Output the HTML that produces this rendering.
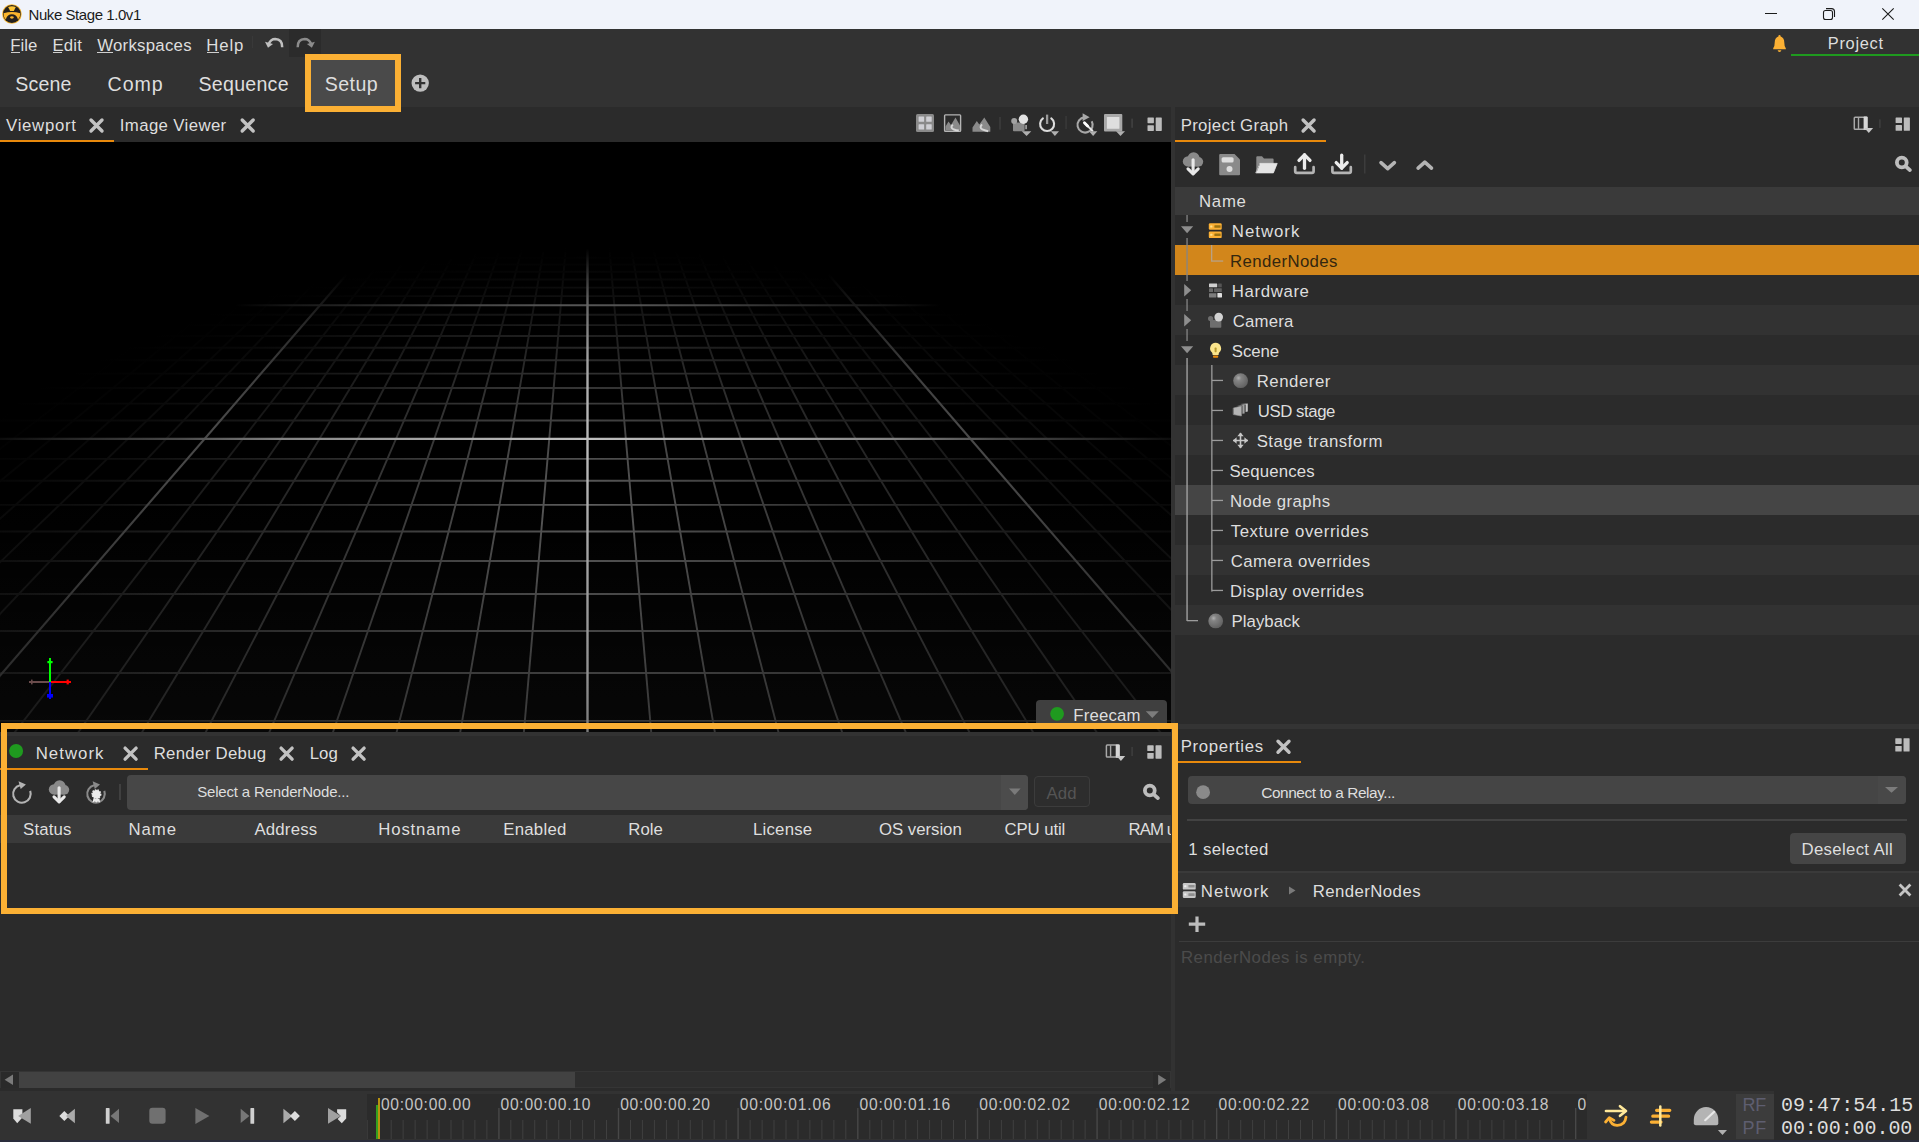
<!DOCTYPE html><html><head><meta charset="utf-8"><title>Nuke Stage 1.0v1</title><style>html,body{margin:0;padding:0;background:#2b2b2b;overflow:hidden}#r{position:relative;width:1919px;height:1142px;overflow:hidden;background:#2b2b2b;font-family:"Liberation Sans",sans-serif}</style></head><body><div id="r"><div style="position:absolute;left:0px;top:0px;width:1919px;height:29px;background:#f0f3fa;"></div>
<div style="position:absolute;left:0px;top:29px;width:1919px;height:78px;background:#323232;"></div>
<div style="position:absolute;left:288.5px;top:29px;width:32.5px;height:27.6px;background:#2b2b2b;"></div>
<div style="position:absolute;left:0px;top:107px;width:1171px;height:35px;background:#2b2b2b;"></div>
<div style="position:absolute;left:1171px;top:107px;width:4px;height:984px;background:#323232;"></div>
<div style="position:absolute;left:1175px;top:107px;width:744px;height:616px;background:#2b2b2b;"></div>
<div style="position:absolute;left:1175px;top:724px;width:744px;height:5.4px;background:#343434;"></div>
<div style="position:absolute;left:1175px;top:729px;width:744px;height:362px;background:#2b2b2b;"></div>
<div style="position:absolute;left:0px;top:732px;width:1171px;height:4px;background:#323232;"></div>
<div style="position:absolute;left:0px;top:736px;width:1171px;height:355px;background:#2b2b2b;"></div>
<div style="position:absolute;left:0px;top:1091px;width:1919px;height:49px;background:#323232;"></div>
<div style="position:absolute;left:367px;top:1094px;width:1220px;height:45px;background:#2b2b2b;"></div>
<div style="position:absolute;left:0px;top:1140px;width:1919px;height:2px;background:#2a2d3c;"></div>
<div style="position:absolute;left:0;top:142px;width:1171px;height:590px;background:#000;overflow:hidden"><svg width="1171" height="590" viewBox="0 0 1171 590" style="position:absolute;left:0;top:0;shape-rendering:geometricPrecision"><defs><linearGradient id="g0" gradientUnits="userSpaceOnUse" x1="-462.0" y1="612.8" x2="57.9" y2="236.8"><stop offset="0.00" stop-color="#000000"/><stop offset="0.08" stop-color="#000000"/><stop offset="0.17" stop-color="#000000"/><stop offset="0.25" stop-color="#000000"/><stop offset="0.33" stop-color="#000000"/><stop offset="0.42" stop-color="#010101"/><stop offset="0.50" stop-color="#010101"/><stop offset="0.58" stop-color="#010101"/><stop offset="0.67" stop-color="#010101"/><stop offset="0.75" stop-color="#010101"/><stop offset="0.83" stop-color="#010101"/><stop offset="0.92" stop-color="#000000"/><stop offset="1.00" stop-color="#000000"/></linearGradient><linearGradient id="g1" gradientUnits="userSpaceOnUse" x1="-554.1" y1="734.5" x2="138.8" y2="199.8"><stop offset="0.00" stop-color="#000000"/><stop offset="0.08" stop-color="#000000"/><stop offset="0.17" stop-color="#010101"/><stop offset="0.25" stop-color="#010101"/><stop offset="0.33" stop-color="#010101"/><stop offset="0.42" stop-color="#020202"/><stop offset="0.50" stop-color="#020202"/><stop offset="0.58" stop-color="#030303"/><stop offset="0.67" stop-color="#030303"/><stop offset="0.75" stop-color="#030303"/><stop offset="0.83" stop-color="#020202"/><stop offset="0.92" stop-color="#010101"/><stop offset="1.00" stop-color="#000000"/></linearGradient><linearGradient id="g2" gradientUnits="userSpaceOnUse" x1="-477.9" y1="734.5" x2="195.8" y2="177.4"><stop offset="0.00" stop-color="#010101"/><stop offset="0.08" stop-color="#020202"/><stop offset="0.17" stop-color="#020202"/><stop offset="0.25" stop-color="#030303"/><stop offset="0.33" stop-color="#040404"/><stop offset="0.42" stop-color="#040404"/><stop offset="0.50" stop-color="#050505"/><stop offset="0.58" stop-color="#050505"/><stop offset="0.67" stop-color="#060606"/><stop offset="0.75" stop-color="#050505"/><stop offset="0.83" stop-color="#040404"/><stop offset="0.92" stop-color="#020202"/><stop offset="1.00" stop-color="#000000"/></linearGradient><linearGradient id="g3" gradientUnits="userSpaceOnUse" x1="-401.8" y1="734.5" x2="241.5" y2="161.7"><stop offset="0.00" stop-color="#030303"/><stop offset="0.08" stop-color="#040404"/><stop offset="0.17" stop-color="#050505"/><stop offset="0.25" stop-color="#060606"/><stop offset="0.33" stop-color="#060606"/><stop offset="0.42" stop-color="#070707"/><stop offset="0.50" stop-color="#080808"/><stop offset="0.58" stop-color="#090909"/><stop offset="0.67" stop-color="#090909"/><stop offset="0.75" stop-color="#080808"/><stop offset="0.83" stop-color="#060606"/><stop offset="0.92" stop-color="#030303"/><stop offset="1.00" stop-color="#000000"/></linearGradient><linearGradient id="g4" gradientUnits="userSpaceOnUse" x1="-325.7" y1="734.5" x2="280.5" y2="149.7"><stop offset="0.00" stop-color="#060606"/><stop offset="0.08" stop-color="#070707"/><stop offset="0.17" stop-color="#080808"/><stop offset="0.25" stop-color="#090909"/><stop offset="0.33" stop-color="#0a0a0a"/><stop offset="0.42" stop-color="#0b0b0b"/><stop offset="0.50" stop-color="#0c0c0c"/><stop offset="0.58" stop-color="#0d0d0d"/><stop offset="0.67" stop-color="#0d0d0d"/><stop offset="0.75" stop-color="#0c0c0c"/><stop offset="0.83" stop-color="#090909"/><stop offset="0.92" stop-color="#040404"/><stop offset="1.00" stop-color="#000000"/></linearGradient><linearGradient id="g5" gradientUnits="userSpaceOnUse" x1="-249.6" y1="734.5" x2="315.0" y2="140.3"><stop offset="0.00" stop-color="#090909"/><stop offset="0.08" stop-color="#0a0a0a"/><stop offset="0.17" stop-color="#0b0b0b"/><stop offset="0.25" stop-color="#0c0c0c"/><stop offset="0.33" stop-color="#0e0e0e"/><stop offset="0.42" stop-color="#0f0f0f"/><stop offset="0.50" stop-color="#101010"/><stop offset="0.58" stop-color="#111111"/><stop offset="0.67" stop-color="#111111"/><stop offset="0.75" stop-color="#101010"/><stop offset="0.83" stop-color="#0c0c0c"/><stop offset="0.92" stop-color="#060606"/><stop offset="1.00" stop-color="#000000"/></linearGradient><linearGradient id="g6" gradientUnits="userSpaceOnUse" x1="-548.9" y1="698.2" x2="1724.0" y2="698.2"><stop offset="0.00" stop-color="#000000"/><stop offset="0.08" stop-color="#040404"/><stop offset="0.17" stop-color="#0c0c0c"/><stop offset="0.25" stop-color="#151515"/><stop offset="0.33" stop-color="#1f1f1f"/><stop offset="0.42" stop-color="#272727"/><stop offset="0.50" stop-color="#2a2a2a"/><stop offset="0.58" stop-color="#272727"/><stop offset="0.67" stop-color="#1f1f1f"/><stop offset="0.75" stop-color="#151515"/><stop offset="0.83" stop-color="#0c0c0c"/><stop offset="0.92" stop-color="#040404"/><stop offset="1.00" stop-color="#000000"/></linearGradient><linearGradient id="g7" gradientUnits="userSpaceOnUse" x1="-97.4" y1="734.5" x2="375.2" y2="126.6"><stop offset="0.00" stop-color="#0f0f0f"/><stop offset="0.08" stop-color="#111111"/><stop offset="0.17" stop-color="#131313"/><stop offset="0.25" stop-color="#151515"/><stop offset="0.33" stop-color="#171717"/><stop offset="0.42" stop-color="#191919"/><stop offset="0.50" stop-color="#1a1a1a"/><stop offset="0.58" stop-color="#1b1b1b"/><stop offset="0.67" stop-color="#1b1b1b"/><stop offset="0.75" stop-color="#181818"/><stop offset="0.83" stop-color="#121212"/><stop offset="0.92" stop-color="#090909"/><stop offset="1.00" stop-color="#000000"/></linearGradient><linearGradient id="g8" gradientUnits="userSpaceOnUse" x1="-425.5" y1="578.9" x2="1600.6" y2="578.9"><stop offset="0.00" stop-color="#000000"/><stop offset="0.08" stop-color="#050505"/><stop offset="0.17" stop-color="#0d0d0d"/><stop offset="0.25" stop-color="#191919"/><stop offset="0.33" stop-color="#252525"/><stop offset="0.42" stop-color="#313131"/><stop offset="0.50" stop-color="#353535"/><stop offset="0.58" stop-color="#313131"/><stop offset="0.67" stop-color="#252525"/><stop offset="0.75" stop-color="#191919"/><stop offset="0.83" stop-color="#0d0d0d"/><stop offset="0.92" stop-color="#050505"/><stop offset="1.00" stop-color="#000000"/></linearGradient><linearGradient id="g9" gradientUnits="userSpaceOnUse" x1="-21.3" y1="734.5" x2="402.3" y2="121.6"><stop offset="0.00" stop-color="#131313"/><stop offset="0.08" stop-color="#151515"/><stop offset="0.17" stop-color="#171717"/><stop offset="0.25" stop-color="#191919"/><stop offset="0.33" stop-color="#1c1c1c"/><stop offset="0.42" stop-color="#1e1e1e"/><stop offset="0.50" stop-color="#202020"/><stop offset="0.58" stop-color="#212121"/><stop offset="0.67" stop-color="#212121"/><stop offset="0.75" stop-color="#1d1d1d"/><stop offset="0.83" stop-color="#151515"/><stop offset="0.92" stop-color="#0a0a0a"/><stop offset="1.00" stop-color="#000000"/></linearGradient><linearGradient id="g10" gradientUnits="userSpaceOnUse" x1="-371.9" y1="531.0" x2="1547.0" y2="531.0"><stop offset="0.00" stop-color="#000000"/><stop offset="0.08" stop-color="#050505"/><stop offset="0.17" stop-color="#0e0e0e"/><stop offset="0.25" stop-color="#1a1a1a"/><stop offset="0.33" stop-color="#282828"/><stop offset="0.42" stop-color="#353535"/><stop offset="0.50" stop-color="#3b3b3b"/><stop offset="0.58" stop-color="#353535"/><stop offset="0.67" stop-color="#282828"/><stop offset="0.75" stop-color="#1a1a1a"/><stop offset="0.83" stop-color="#0e0e0e"/><stop offset="0.92" stop-color="#050505"/><stop offset="1.00" stop-color="#000000"/></linearGradient><linearGradient id="g11" gradientUnits="userSpaceOnUse" x1="54.8" y1="734.5" x2="428.0" y2="117.4"><stop offset="0.00" stop-color="#171717"/><stop offset="0.08" stop-color="#191919"/><stop offset="0.17" stop-color="#1b1b1b"/><stop offset="0.25" stop-color="#1e1e1e"/><stop offset="0.33" stop-color="#212121"/><stop offset="0.42" stop-color="#232323"/><stop offset="0.50" stop-color="#262626"/><stop offset="0.58" stop-color="#272727"/><stop offset="0.67" stop-color="#262626"/><stop offset="0.75" stop-color="#222222"/><stop offset="0.83" stop-color="#191919"/><stop offset="0.92" stop-color="#0b0b0b"/><stop offset="1.00" stop-color="#000000"/></linearGradient><linearGradient id="g12" gradientUnits="userSpaceOnUse" x1="-322.6" y1="489.0" x2="1497.7" y2="489.0"><stop offset="0.00" stop-color="#000000"/><stop offset="0.08" stop-color="#050505"/><stop offset="0.17" stop-color="#0f0f0f"/><stop offset="0.25" stop-color="#1c1c1c"/><stop offset="0.33" stop-color="#2b2b2b"/><stop offset="0.42" stop-color="#3a3a3a"/><stop offset="0.50" stop-color="#424242"/><stop offset="0.58" stop-color="#3a3a3a"/><stop offset="0.67" stop-color="#2b2b2b"/><stop offset="0.75" stop-color="#1c1c1c"/><stop offset="0.83" stop-color="#0f0f0f"/><stop offset="0.92" stop-color="#050505"/><stop offset="1.00" stop-color="#000000"/></linearGradient><linearGradient id="g13" gradientUnits="userSpaceOnUse" x1="130.9" y1="734.5" x2="452.6" y2="114.0"><stop offset="0.00" stop-color="#1a1a1a"/><stop offset="0.08" stop-color="#1d1d1d"/><stop offset="0.17" stop-color="#202020"/><stop offset="0.25" stop-color="#232323"/><stop offset="0.33" stop-color="#262626"/><stop offset="0.42" stop-color="#292929"/><stop offset="0.50" stop-color="#2c2c2c"/><stop offset="0.58" stop-color="#2e2e2e"/><stop offset="0.67" stop-color="#2d2d2d"/><stop offset="0.75" stop-color="#272727"/><stop offset="0.83" stop-color="#1c1c1c"/><stop offset="0.92" stop-color="#0d0d0d"/><stop offset="1.00" stop-color="#000000"/></linearGradient><linearGradient id="g14" gradientUnits="userSpaceOnUse" x1="-276.9" y1="452.0" x2="1452.0" y2="452.0"><stop offset="0.00" stop-color="#000000"/><stop offset="0.08" stop-color="#050505"/><stop offset="0.17" stop-color="#0f0f0f"/><stop offset="0.25" stop-color="#1d1d1d"/><stop offset="0.33" stop-color="#2d2d2d"/><stop offset="0.42" stop-color="#3e3e3e"/><stop offset="0.50" stop-color="#484848"/><stop offset="0.58" stop-color="#3e3e3e"/><stop offset="0.67" stop-color="#2d2d2d"/><stop offset="0.75" stop-color="#1d1d1d"/><stop offset="0.83" stop-color="#0f0f0f"/><stop offset="0.92" stop-color="#050505"/><stop offset="1.00" stop-color="#000000"/></linearGradient><linearGradient id="g15" gradientUnits="userSpaceOnUse" x1="207.0" y1="734.5" x2="476.2" y2="111.3"><stop offset="0.00" stop-color="#1e1e1e"/><stop offset="0.08" stop-color="#212121"/><stop offset="0.17" stop-color="#242424"/><stop offset="0.25" stop-color="#272727"/><stop offset="0.33" stop-color="#2b2b2b"/><stop offset="0.42" stop-color="#2f2f2f"/><stop offset="0.50" stop-color="#333333"/><stop offset="0.58" stop-color="#353535"/><stop offset="0.67" stop-color="#333333"/><stop offset="0.75" stop-color="#2c2c2c"/><stop offset="0.83" stop-color="#1f1f1f"/><stop offset="0.92" stop-color="#0e0e0e"/><stop offset="1.00" stop-color="#000000"/></linearGradient><linearGradient id="g16" gradientUnits="userSpaceOnUse" x1="-234.1" y1="419.0" x2="1409.2" y2="419.0"><stop offset="0.00" stop-color="#000000"/><stop offset="0.08" stop-color="#050505"/><stop offset="0.17" stop-color="#101010"/><stop offset="0.25" stop-color="#1e1e1e"/><stop offset="0.33" stop-color="#2f2f2f"/><stop offset="0.42" stop-color="#424242"/><stop offset="0.50" stop-color="#4f4f4f"/><stop offset="0.58" stop-color="#424242"/><stop offset="0.67" stop-color="#2f2f2f"/><stop offset="0.75" stop-color="#1e1e1e"/><stop offset="0.83" stop-color="#101010"/><stop offset="0.92" stop-color="#050505"/><stop offset="1.00" stop-color="#000000"/></linearGradient><linearGradient id="g17" gradientUnits="userSpaceOnUse" x1="283.1" y1="734.5" x2="499.2" y2="109.1"><stop offset="0.00" stop-color="#212121"/><stop offset="0.08" stop-color="#242424"/><stop offset="0.17" stop-color="#282828"/><stop offset="0.25" stop-color="#2c2c2c"/><stop offset="0.33" stop-color="#303030"/><stop offset="0.42" stop-color="#353535"/><stop offset="0.50" stop-color="#393939"/><stop offset="0.58" stop-color="#3c3c3c"/><stop offset="0.67" stop-color="#3a3a3a"/><stop offset="0.75" stop-color="#313131"/><stop offset="0.83" stop-color="#212121"/><stop offset="0.92" stop-color="#0f0f0f"/><stop offset="1.00" stop-color="#000000"/></linearGradient><linearGradient id="g18" gradientUnits="userSpaceOnUse" x1="-194.0" y1="389.5" x2="1369.1" y2="389.5"><stop offset="0.00" stop-color="#000000"/><stop offset="0.08" stop-color="#050505"/><stop offset="0.17" stop-color="#101010"/><stop offset="0.25" stop-color="#1e1e1e"/><stop offset="0.33" stop-color="#303030"/><stop offset="0.42" stop-color="#444444"/><stop offset="0.50" stop-color="#555555"/><stop offset="0.58" stop-color="#444444"/><stop offset="0.67" stop-color="#303030"/><stop offset="0.75" stop-color="#1e1e1e"/><stop offset="0.83" stop-color="#101010"/><stop offset="0.92" stop-color="#050505"/><stop offset="1.00" stop-color="#000000"/></linearGradient><linearGradient id="g19" gradientUnits="userSpaceOnUse" x1="359.2" y1="734.5" x2="521.7" y2="107.5"><stop offset="0.00" stop-color="#242424"/><stop offset="0.08" stop-color="#272727"/><stop offset="0.17" stop-color="#2b2b2b"/><stop offset="0.25" stop-color="#303030"/><stop offset="0.33" stop-color="#353535"/><stop offset="0.42" stop-color="#3b3b3b"/><stop offset="0.50" stop-color="#404040"/><stop offset="0.58" stop-color="#444444"/><stop offset="0.67" stop-color="#404040"/><stop offset="0.75" stop-color="#353535"/><stop offset="0.83" stop-color="#242424"/><stop offset="0.92" stop-color="#0f0f0f"/><stop offset="1.00" stop-color="#000000"/></linearGradient><linearGradient id="g20" gradientUnits="userSpaceOnUse" x1="-156.1" y1="362.9" x2="1331.2" y2="362.9"><stop offset="0.00" stop-color="#000000"/><stop offset="0.08" stop-color="#050505"/><stop offset="0.17" stop-color="#101010"/><stop offset="0.25" stop-color="#1f1f1f"/><stop offset="0.33" stop-color="#303030"/><stop offset="0.42" stop-color="#454545"/><stop offset="0.50" stop-color="#5d5d5d"/><stop offset="0.58" stop-color="#454545"/><stop offset="0.67" stop-color="#303030"/><stop offset="0.75" stop-color="#1f1f1f"/><stop offset="0.83" stop-color="#101010"/><stop offset="0.92" stop-color="#050505"/><stop offset="1.00" stop-color="#000000"/></linearGradient><linearGradient id="g21" gradientUnits="userSpaceOnUse" x1="435.3" y1="734.5" x2="543.9" y2="106.3"><stop offset="0.00" stop-color="#262626"/><stop offset="0.08" stop-color="#292929"/><stop offset="0.17" stop-color="#2e2e2e"/><stop offset="0.25" stop-color="#333333"/><stop offset="0.33" stop-color="#393939"/><stop offset="0.42" stop-color="#3f3f3f"/><stop offset="0.50" stop-color="#474747"/><stop offset="0.58" stop-color="#4c4c4c"/><stop offset="0.67" stop-color="#474747"/><stop offset="0.75" stop-color="#393939"/><stop offset="0.83" stop-color="#252525"/><stop offset="0.92" stop-color="#101010"/><stop offset="1.00" stop-color="#000000"/></linearGradient><linearGradient id="g22" gradientUnits="userSpaceOnUse" x1="-120.1" y1="338.8" x2="1295.2" y2="338.8"><stop offset="0.00" stop-color="#000000"/><stop offset="0.08" stop-color="#050505"/><stop offset="0.17" stop-color="#101010"/><stop offset="0.25" stop-color="#1e1e1e"/><stop offset="0.33" stop-color="#303030"/><stop offset="0.42" stop-color="#444444"/><stop offset="0.50" stop-color="#555555"/><stop offset="0.58" stop-color="#444444"/><stop offset="0.67" stop-color="#303030"/><stop offset="0.75" stop-color="#1e1e1e"/><stop offset="0.83" stop-color="#101010"/><stop offset="0.92" stop-color="#050505"/><stop offset="1.00" stop-color="#000000"/></linearGradient><linearGradient id="g23" gradientUnits="userSpaceOnUse" x1="511.4" y1="734.5" x2="565.8" y2="105.7"><stop offset="0.00" stop-color="#272727"/><stop offset="0.08" stop-color="#2b2b2b"/><stop offset="0.17" stop-color="#2f2f2f"/><stop offset="0.25" stop-color="#353535"/><stop offset="0.33" stop-color="#3b3b3b"/><stop offset="0.42" stop-color="#434343"/><stop offset="0.50" stop-color="#4c4c4c"/><stop offset="0.58" stop-color="#545454"/><stop offset="0.67" stop-color="#4c4c4c"/><stop offset="0.75" stop-color="#3b3b3b"/><stop offset="0.83" stop-color="#272727"/><stop offset="0.92" stop-color="#101010"/><stop offset="1.00" stop-color="#000000"/></linearGradient><linearGradient id="g24" gradientUnits="userSpaceOnUse" x1="-85.7" y1="316.9" x2="1260.8" y2="316.9"><stop offset="0.00" stop-color="#000000"/><stop offset="0.08" stop-color="#050505"/><stop offset="0.17" stop-color="#101010"/><stop offset="0.25" stop-color="#1e1e1e"/><stop offset="0.33" stop-color="#2f2f2f"/><stop offset="0.42" stop-color="#424242"/><stop offset="0.50" stop-color="#4f4f4f"/><stop offset="0.58" stop-color="#424242"/><stop offset="0.67" stop-color="#2f2f2f"/><stop offset="0.75" stop-color="#1e1e1e"/><stop offset="0.83" stop-color="#101010"/><stop offset="0.92" stop-color="#050505"/><stop offset="1.00" stop-color="#000000"/></linearGradient><linearGradient id="g25" gradientUnits="userSpaceOnUse" x1="663.7" y1="734.5" x2="609.3" y2="105.7"><stop offset="0.00" stop-color="#272727"/><stop offset="0.08" stop-color="#2b2b2b"/><stop offset="0.17" stop-color="#2f2f2f"/><stop offset="0.25" stop-color="#353535"/><stop offset="0.33" stop-color="#3b3b3b"/><stop offset="0.42" stop-color="#434343"/><stop offset="0.50" stop-color="#4c4c4c"/><stop offset="0.58" stop-color="#545454"/><stop offset="0.67" stop-color="#4c4c4c"/><stop offset="0.75" stop-color="#3b3b3b"/><stop offset="0.83" stop-color="#272727"/><stop offset="0.92" stop-color="#101010"/><stop offset="1.00" stop-color="#000000"/></linearGradient><linearGradient id="g26" gradientUnits="userSpaceOnUse" x1="-21.1" y1="278.5" x2="1196.2" y2="278.5"><stop offset="0.00" stop-color="#000000"/><stop offset="0.08" stop-color="#050505"/><stop offset="0.17" stop-color="#0f0f0f"/><stop offset="0.25" stop-color="#1c1c1c"/><stop offset="0.33" stop-color="#2b2b2b"/><stop offset="0.42" stop-color="#3a3a3a"/><stop offset="0.50" stop-color="#424242"/><stop offset="0.58" stop-color="#3a3a3a"/><stop offset="0.67" stop-color="#2b2b2b"/><stop offset="0.75" stop-color="#1c1c1c"/><stop offset="0.83" stop-color="#0f0f0f"/><stop offset="0.92" stop-color="#050505"/><stop offset="1.00" stop-color="#000000"/></linearGradient><linearGradient id="g27" gradientUnits="userSpaceOnUse" x1="739.8" y1="734.5" x2="631.2" y2="106.3"><stop offset="0.00" stop-color="#262626"/><stop offset="0.08" stop-color="#292929"/><stop offset="0.17" stop-color="#2e2e2e"/><stop offset="0.25" stop-color="#333333"/><stop offset="0.33" stop-color="#393939"/><stop offset="0.42" stop-color="#3f3f3f"/><stop offset="0.50" stop-color="#474747"/><stop offset="0.58" stop-color="#4c4c4c"/><stop offset="0.67" stop-color="#474747"/><stop offset="0.75" stop-color="#393939"/><stop offset="0.83" stop-color="#252525"/><stop offset="0.92" stop-color="#101010"/><stop offset="1.00" stop-color="#000000"/></linearGradient><linearGradient id="g28" gradientUnits="userSpaceOnUse" x1="9.6" y1="261.6" x2="1165.5" y2="261.6"><stop offset="0.00" stop-color="#000000"/><stop offset="0.08" stop-color="#050505"/><stop offset="0.17" stop-color="#0e0e0e"/><stop offset="0.25" stop-color="#1a1a1a"/><stop offset="0.33" stop-color="#282828"/><stop offset="0.42" stop-color="#353535"/><stop offset="0.50" stop-color="#3b3b3b"/><stop offset="0.58" stop-color="#353535"/><stop offset="0.67" stop-color="#282828"/><stop offset="0.75" stop-color="#1a1a1a"/><stop offset="0.83" stop-color="#0e0e0e"/><stop offset="0.92" stop-color="#050505"/><stop offset="1.00" stop-color="#000000"/></linearGradient><linearGradient id="g29" gradientUnits="userSpaceOnUse" x1="815.9" y1="734.5" x2="653.4" y2="107.5"><stop offset="0.00" stop-color="#242424"/><stop offset="0.08" stop-color="#272727"/><stop offset="0.17" stop-color="#2b2b2b"/><stop offset="0.25" stop-color="#303030"/><stop offset="0.33" stop-color="#353535"/><stop offset="0.42" stop-color="#3b3b3b"/><stop offset="0.50" stop-color="#404040"/><stop offset="0.58" stop-color="#444444"/><stop offset="0.67" stop-color="#404040"/><stop offset="0.75" stop-color="#353535"/><stop offset="0.83" stop-color="#242424"/><stop offset="0.92" stop-color="#0f0f0f"/><stop offset="1.00" stop-color="#000000"/></linearGradient><linearGradient id="g30" gradientUnits="userSpaceOnUse" x1="39.4" y1="246.0" x2="1135.7" y2="246.0"><stop offset="0.00" stop-color="#000000"/><stop offset="0.08" stop-color="#050505"/><stop offset="0.17" stop-color="#0d0d0d"/><stop offset="0.25" stop-color="#191919"/><stop offset="0.33" stop-color="#252525"/><stop offset="0.42" stop-color="#313131"/><stop offset="0.50" stop-color="#353535"/><stop offset="0.58" stop-color="#313131"/><stop offset="0.67" stop-color="#252525"/><stop offset="0.75" stop-color="#191919"/><stop offset="0.83" stop-color="#0d0d0d"/><stop offset="0.92" stop-color="#050505"/><stop offset="1.00" stop-color="#000000"/></linearGradient><linearGradient id="g31" gradientUnits="userSpaceOnUse" x1="892.0" y1="734.5" x2="675.9" y2="109.1"><stop offset="0.00" stop-color="#212121"/><stop offset="0.08" stop-color="#242424"/><stop offset="0.17" stop-color="#282828"/><stop offset="0.25" stop-color="#2c2c2c"/><stop offset="0.33" stop-color="#303030"/><stop offset="0.42" stop-color="#353535"/><stop offset="0.50" stop-color="#393939"/><stop offset="0.58" stop-color="#3c3c3c"/><stop offset="0.67" stop-color="#3a3a3a"/><stop offset="0.75" stop-color="#313131"/><stop offset="0.83" stop-color="#212121"/><stop offset="0.92" stop-color="#0f0f0f"/><stop offset="1.00" stop-color="#000000"/></linearGradient><linearGradient id="g32" gradientUnits="userSpaceOnUse" x1="68.5" y1="231.6" x2="1106.6" y2="231.6"><stop offset="0.00" stop-color="#000000"/><stop offset="0.08" stop-color="#040404"/><stop offset="0.17" stop-color="#0d0d0d"/><stop offset="0.25" stop-color="#171717"/><stop offset="0.33" stop-color="#222222"/><stop offset="0.42" stop-color="#2c2c2c"/><stop offset="0.50" stop-color="#303030"/><stop offset="0.58" stop-color="#2c2c2c"/><stop offset="0.67" stop-color="#222222"/><stop offset="0.75" stop-color="#171717"/><stop offset="0.83" stop-color="#0d0d0d"/><stop offset="0.92" stop-color="#040404"/><stop offset="1.00" stop-color="#000000"/></linearGradient><linearGradient id="g33" gradientUnits="userSpaceOnUse" x1="968.1" y1="734.5" x2="698.9" y2="111.3"><stop offset="0.00" stop-color="#1e1e1e"/><stop offset="0.08" stop-color="#212121"/><stop offset="0.17" stop-color="#242424"/><stop offset="0.25" stop-color="#272727"/><stop offset="0.33" stop-color="#2b2b2b"/><stop offset="0.42" stop-color="#2f2f2f"/><stop offset="0.50" stop-color="#333333"/><stop offset="0.58" stop-color="#353535"/><stop offset="0.67" stop-color="#333333"/><stop offset="0.75" stop-color="#2c2c2c"/><stop offset="0.83" stop-color="#1f1f1f"/><stop offset="0.92" stop-color="#0e0e0e"/><stop offset="1.00" stop-color="#000000"/></linearGradient><linearGradient id="g34" gradientUnits="userSpaceOnUse" x1="97.0" y1="218.2" x2="1078.1" y2="218.2"><stop offset="0.00" stop-color="#000000"/><stop offset="0.08" stop-color="#040404"/><stop offset="0.17" stop-color="#0c0c0c"/><stop offset="0.25" stop-color="#151515"/><stop offset="0.33" stop-color="#1f1f1f"/><stop offset="0.42" stop-color="#272727"/><stop offset="0.50" stop-color="#2a2a2a"/><stop offset="0.58" stop-color="#272727"/><stop offset="0.67" stop-color="#1f1f1f"/><stop offset="0.75" stop-color="#151515"/><stop offset="0.83" stop-color="#0c0c0c"/><stop offset="0.92" stop-color="#040404"/><stop offset="1.00" stop-color="#000000"/></linearGradient><linearGradient id="g35" gradientUnits="userSpaceOnUse" x1="1044.2" y1="734.5" x2="722.5" y2="114.0"><stop offset="0.00" stop-color="#1a1a1a"/><stop offset="0.08" stop-color="#1d1d1d"/><stop offset="0.17" stop-color="#202020"/><stop offset="0.25" stop-color="#232323"/><stop offset="0.33" stop-color="#262626"/><stop offset="0.42" stop-color="#292929"/><stop offset="0.50" stop-color="#2c2c2c"/><stop offset="0.58" stop-color="#2e2e2e"/><stop offset="0.67" stop-color="#2d2d2d"/><stop offset="0.75" stop-color="#272727"/><stop offset="0.83" stop-color="#1c1c1c"/><stop offset="0.92" stop-color="#0d0d0d"/><stop offset="1.00" stop-color="#000000"/></linearGradient><linearGradient id="g36" gradientUnits="userSpaceOnUse" x1="125.2" y1="205.7" x2="1049.9" y2="205.7"><stop offset="0.00" stop-color="#000000"/><stop offset="0.08" stop-color="#040404"/><stop offset="0.17" stop-color="#0b0b0b"/><stop offset="0.25" stop-color="#131313"/><stop offset="0.33" stop-color="#1c1c1c"/><stop offset="0.42" stop-color="#222222"/><stop offset="0.50" stop-color="#252525"/><stop offset="0.58" stop-color="#222222"/><stop offset="0.67" stop-color="#1c1c1c"/><stop offset="0.75" stop-color="#131313"/><stop offset="0.83" stop-color="#0b0b0b"/><stop offset="0.92" stop-color="#040404"/><stop offset="1.00" stop-color="#000000"/></linearGradient><linearGradient id="g37" gradientUnits="userSpaceOnUse" x1="1120.3" y1="734.5" x2="747.1" y2="117.4"><stop offset="0.00" stop-color="#171717"/><stop offset="0.08" stop-color="#191919"/><stop offset="0.17" stop-color="#1b1b1b"/><stop offset="0.25" stop-color="#1e1e1e"/><stop offset="0.33" stop-color="#212121"/><stop offset="0.42" stop-color="#232323"/><stop offset="0.50" stop-color="#262626"/><stop offset="0.58" stop-color="#272727"/><stop offset="0.67" stop-color="#262626"/><stop offset="0.75" stop-color="#222222"/><stop offset="0.83" stop-color="#191919"/><stop offset="0.92" stop-color="#0b0b0b"/><stop offset="1.00" stop-color="#000000"/></linearGradient><linearGradient id="g38" gradientUnits="userSpaceOnUse" x1="153.0" y1="194.0" x2="1022.1" y2="194.0"><stop offset="0.00" stop-color="#000000"/><stop offset="0.08" stop-color="#030303"/><stop offset="0.17" stop-color="#0a0a0a"/><stop offset="0.25" stop-color="#111111"/><stop offset="0.33" stop-color="#181818"/><stop offset="0.42" stop-color="#1e1e1e"/><stop offset="0.50" stop-color="#202020"/><stop offset="0.58" stop-color="#1e1e1e"/><stop offset="0.67" stop-color="#181818"/><stop offset="0.75" stop-color="#111111"/><stop offset="0.83" stop-color="#0a0a0a"/><stop offset="0.92" stop-color="#030303"/><stop offset="1.00" stop-color="#000000"/></linearGradient><linearGradient id="g39" gradientUnits="userSpaceOnUse" x1="1196.4" y1="734.5" x2="772.8" y2="121.6"><stop offset="0.00" stop-color="#131313"/><stop offset="0.08" stop-color="#151515"/><stop offset="0.17" stop-color="#171717"/><stop offset="0.25" stop-color="#191919"/><stop offset="0.33" stop-color="#1c1c1c"/><stop offset="0.42" stop-color="#1e1e1e"/><stop offset="0.50" stop-color="#202020"/><stop offset="0.58" stop-color="#212121"/><stop offset="0.67" stop-color="#212121"/><stop offset="0.75" stop-color="#1d1d1d"/><stop offset="0.83" stop-color="#151515"/><stop offset="0.92" stop-color="#0a0a0a"/><stop offset="1.00" stop-color="#000000"/></linearGradient><linearGradient id="g40" gradientUnits="userSpaceOnUse" x1="180.8" y1="183.1" x2="994.3" y2="183.1"><stop offset="0.00" stop-color="#000000"/><stop offset="0.08" stop-color="#030303"/><stop offset="0.17" stop-color="#080808"/><stop offset="0.25" stop-color="#0f0f0f"/><stop offset="0.33" stop-color="#151515"/><stop offset="0.42" stop-color="#1a1a1a"/><stop offset="0.50" stop-color="#1b1b1b"/><stop offset="0.58" stop-color="#1a1a1a"/><stop offset="0.67" stop-color="#151515"/><stop offset="0.75" stop-color="#0f0f0f"/><stop offset="0.83" stop-color="#080808"/><stop offset="0.92" stop-color="#030303"/><stop offset="1.00" stop-color="#000000"/></linearGradient><linearGradient id="g41" gradientUnits="userSpaceOnUse" x1="1272.5" y1="734.5" x2="799.9" y2="126.6"><stop offset="0.00" stop-color="#0f0f0f"/><stop offset="0.08" stop-color="#111111"/><stop offset="0.17" stop-color="#131313"/><stop offset="0.25" stop-color="#151515"/><stop offset="0.33" stop-color="#171717"/><stop offset="0.42" stop-color="#191919"/><stop offset="0.50" stop-color="#1a1a1a"/><stop offset="0.58" stop-color="#1b1b1b"/><stop offset="0.67" stop-color="#1b1b1b"/><stop offset="0.75" stop-color="#181818"/><stop offset="0.83" stop-color="#121212"/><stop offset="0.92" stop-color="#090909"/><stop offset="1.00" stop-color="#000000"/></linearGradient><linearGradient id="g42" gradientUnits="userSpaceOnUse" x1="208.7" y1="172.8" x2="966.4" y2="172.8"><stop offset="0.00" stop-color="#000000"/><stop offset="0.08" stop-color="#030303"/><stop offset="0.17" stop-color="#070707"/><stop offset="0.25" stop-color="#0d0d0d"/><stop offset="0.33" stop-color="#121212"/><stop offset="0.42" stop-color="#161616"/><stop offset="0.50" stop-color="#171717"/><stop offset="0.58" stop-color="#161616"/><stop offset="0.67" stop-color="#121212"/><stop offset="0.75" stop-color="#0d0d0d"/><stop offset="0.83" stop-color="#070707"/><stop offset="0.92" stop-color="#030303"/><stop offset="1.00" stop-color="#000000"/></linearGradient><linearGradient id="g43" gradientUnits="userSpaceOnUse" x1="1424.7" y1="734.5" x2="860.1" y2="140.3"><stop offset="0.00" stop-color="#090909"/><stop offset="0.08" stop-color="#0a0a0a"/><stop offset="0.17" stop-color="#0b0b0b"/><stop offset="0.25" stop-color="#0c0c0c"/><stop offset="0.33" stop-color="#0e0e0e"/><stop offset="0.42" stop-color="#0f0f0f"/><stop offset="0.50" stop-color="#101010"/><stop offset="0.58" stop-color="#111111"/><stop offset="0.67" stop-color="#111111"/><stop offset="0.75" stop-color="#101010"/><stop offset="0.83" stop-color="#0c0c0c"/><stop offset="0.92" stop-color="#060606"/><stop offset="1.00" stop-color="#000000"/></linearGradient><linearGradient id="g44" gradientUnits="userSpaceOnUse" x1="265.7" y1="154.1" x2="909.4" y2="154.1"><stop offset="0.00" stop-color="#000000"/><stop offset="0.08" stop-color="#020202"/><stop offset="0.17" stop-color="#050505"/><stop offset="0.25" stop-color="#090909"/><stop offset="0.33" stop-color="#0c0c0c"/><stop offset="0.42" stop-color="#0e0e0e"/><stop offset="0.50" stop-color="#0f0f0f"/><stop offset="0.58" stop-color="#0e0e0e"/><stop offset="0.67" stop-color="#0c0c0c"/><stop offset="0.75" stop-color="#090909"/><stop offset="0.83" stop-color="#050505"/><stop offset="0.92" stop-color="#020202"/><stop offset="1.00" stop-color="#000000"/></linearGradient><linearGradient id="g45" gradientUnits="userSpaceOnUse" x1="1500.8" y1="734.5" x2="894.6" y2="149.7"><stop offset="0.00" stop-color="#060606"/><stop offset="0.08" stop-color="#070707"/><stop offset="0.17" stop-color="#080808"/><stop offset="0.25" stop-color="#090909"/><stop offset="0.33" stop-color="#0a0a0a"/><stop offset="0.42" stop-color="#0b0b0b"/><stop offset="0.50" stop-color="#0c0c0c"/><stop offset="0.58" stop-color="#0d0d0d"/><stop offset="0.67" stop-color="#0d0d0d"/><stop offset="0.75" stop-color="#0c0c0c"/><stop offset="0.83" stop-color="#090909"/><stop offset="0.92" stop-color="#040404"/><stop offset="1.00" stop-color="#000000"/></linearGradient><linearGradient id="g46" gradientUnits="userSpaceOnUse" x1="295.4" y1="145.6" x2="879.7" y2="145.6"><stop offset="0.00" stop-color="#000000"/><stop offset="0.08" stop-color="#010101"/><stop offset="0.17" stop-color="#040404"/><stop offset="0.25" stop-color="#070707"/><stop offset="0.33" stop-color="#090909"/><stop offset="0.42" stop-color="#0b0b0b"/><stop offset="0.50" stop-color="#0c0c0c"/><stop offset="0.58" stop-color="#0b0b0b"/><stop offset="0.67" stop-color="#090909"/><stop offset="0.75" stop-color="#070707"/><stop offset="0.83" stop-color="#040404"/><stop offset="0.92" stop-color="#010101"/><stop offset="1.00" stop-color="#000000"/></linearGradient><linearGradient id="g47" gradientUnits="userSpaceOnUse" x1="1576.9" y1="734.5" x2="933.6" y2="161.7"><stop offset="0.00" stop-color="#030303"/><stop offset="0.08" stop-color="#040404"/><stop offset="0.17" stop-color="#050505"/><stop offset="0.25" stop-color="#060606"/><stop offset="0.33" stop-color="#060606"/><stop offset="0.42" stop-color="#070707"/><stop offset="0.50" stop-color="#080808"/><stop offset="0.58" stop-color="#090909"/><stop offset="0.67" stop-color="#090909"/><stop offset="0.75" stop-color="#080808"/><stop offset="0.83" stop-color="#060606"/><stop offset="0.92" stop-color="#030303"/><stop offset="1.00" stop-color="#000000"/></linearGradient><linearGradient id="g48" gradientUnits="userSpaceOnUse" x1="326.5" y1="137.5" x2="848.6" y2="137.5"><stop offset="0.00" stop-color="#000000"/><stop offset="0.08" stop-color="#010101"/><stop offset="0.17" stop-color="#030303"/><stop offset="0.25" stop-color="#050505"/><stop offset="0.33" stop-color="#070707"/><stop offset="0.42" stop-color="#080808"/><stop offset="0.50" stop-color="#080808"/><stop offset="0.58" stop-color="#080808"/><stop offset="0.67" stop-color="#070707"/><stop offset="0.75" stop-color="#050505"/><stop offset="0.83" stop-color="#030303"/><stop offset="0.92" stop-color="#010101"/><stop offset="1.00" stop-color="#000000"/></linearGradient><linearGradient id="g49" gradientUnits="userSpaceOnUse" x1="1653.0" y1="734.5" x2="979.3" y2="177.4"><stop offset="0.00" stop-color="#010101"/><stop offset="0.08" stop-color="#020202"/><stop offset="0.17" stop-color="#020202"/><stop offset="0.25" stop-color="#030303"/><stop offset="0.33" stop-color="#040404"/><stop offset="0.42" stop-color="#040404"/><stop offset="0.50" stop-color="#050505"/><stop offset="0.58" stop-color="#050505"/><stop offset="0.67" stop-color="#060606"/><stop offset="0.75" stop-color="#050505"/><stop offset="0.83" stop-color="#040404"/><stop offset="0.92" stop-color="#020202"/><stop offset="1.00" stop-color="#000000"/></linearGradient><linearGradient id="g50" gradientUnits="userSpaceOnUse" x1="359.7" y1="129.8" x2="815.4" y2="129.8"><stop offset="0.00" stop-color="#000000"/><stop offset="0.08" stop-color="#010101"/><stop offset="0.17" stop-color="#020202"/><stop offset="0.25" stop-color="#030303"/><stop offset="0.33" stop-color="#050505"/><stop offset="0.42" stop-color="#050505"/><stop offset="0.50" stop-color="#060606"/><stop offset="0.58" stop-color="#050505"/><stop offset="0.67" stop-color="#050505"/><stop offset="0.75" stop-color="#030303"/><stop offset="0.83" stop-color="#020202"/><stop offset="0.92" stop-color="#010101"/><stop offset="1.00" stop-color="#000000"/></linearGradient><linearGradient id="g51" gradientUnits="userSpaceOnUse" x1="1729.2" y1="734.5" x2="1036.3" y2="199.8"><stop offset="0.00" stop-color="#000000"/><stop offset="0.08" stop-color="#000000"/><stop offset="0.17" stop-color="#010101"/><stop offset="0.25" stop-color="#010101"/><stop offset="0.33" stop-color="#010101"/><stop offset="0.42" stop-color="#020202"/><stop offset="0.50" stop-color="#020202"/><stop offset="0.58" stop-color="#030303"/><stop offset="0.67" stop-color="#030303"/><stop offset="0.75" stop-color="#030303"/><stop offset="0.83" stop-color="#020202"/><stop offset="0.92" stop-color="#010101"/><stop offset="1.00" stop-color="#000000"/></linearGradient><linearGradient id="g52" gradientUnits="userSpaceOnUse" x1="396.5" y1="122.6" x2="778.6" y2="122.6"><stop offset="0.00" stop-color="#000000"/><stop offset="0.08" stop-color="#000000"/><stop offset="0.17" stop-color="#010101"/><stop offset="0.25" stop-color="#020202"/><stop offset="0.33" stop-color="#030303"/><stop offset="0.42" stop-color="#030303"/><stop offset="0.50" stop-color="#030303"/><stop offset="0.58" stop-color="#030303"/><stop offset="0.67" stop-color="#030303"/><stop offset="0.75" stop-color="#020202"/><stop offset="0.83" stop-color="#010101"/><stop offset="0.92" stop-color="#000000"/><stop offset="1.00" stop-color="#000000"/></linearGradient><linearGradient id="g53" gradientUnits="userSpaceOnUse" x1="1637.1" y1="612.8" x2="1117.2" y2="236.8"><stop offset="0.00" stop-color="#000000"/><stop offset="0.08" stop-color="#000000"/><stop offset="0.17" stop-color="#000000"/><stop offset="0.25" stop-color="#000000"/><stop offset="0.33" stop-color="#000000"/><stop offset="0.42" stop-color="#010101"/><stop offset="0.50" stop-color="#010101"/><stop offset="0.58" stop-color="#010101"/><stop offset="0.67" stop-color="#010101"/><stop offset="0.75" stop-color="#010101"/><stop offset="0.83" stop-color="#010101"/><stop offset="0.92" stop-color="#000000"/><stop offset="1.00" stop-color="#000000"/></linearGradient><linearGradient id="g54" gradientUnits="userSpaceOnUse" x1="439.7" y1="115.7" x2="735.4" y2="115.7"><stop offset="0.00" stop-color="#000000"/><stop offset="0.08" stop-color="#000000"/><stop offset="0.17" stop-color="#010101"/><stop offset="0.25" stop-color="#010101"/><stop offset="0.33" stop-color="#010101"/><stop offset="0.42" stop-color="#010101"/><stop offset="0.50" stop-color="#020202"/><stop offset="0.58" stop-color="#010101"/><stop offset="0.67" stop-color="#010101"/><stop offset="0.75" stop-color="#010101"/><stop offset="0.83" stop-color="#010101"/><stop offset="0.92" stop-color="#000000"/><stop offset="1.00" stop-color="#000000"/></linearGradient><linearGradient id="g55" gradientUnits="userSpaceOnUse" x1="498.1" y1="109.2" x2="677.0" y2="109.2"><stop offset="0.00" stop-color="#000000"/><stop offset="0.08" stop-color="#000000"/><stop offset="0.17" stop-color="#000000"/><stop offset="0.25" stop-color="#000000"/><stop offset="0.33" stop-color="#000000"/><stop offset="0.42" stop-color="#000000"/><stop offset="0.50" stop-color="#000000"/><stop offset="0.58" stop-color="#000000"/><stop offset="0.67" stop-color="#000000"/><stop offset="0.75" stop-color="#000000"/><stop offset="0.83" stop-color="#000000"/><stop offset="0.92" stop-color="#000000"/><stop offset="1.00" stop-color="#000000"/></linearGradient><linearGradient id="g56" gradientUnits="userSpaceOnUse" x1="-173.5" y1="734.5" x2="346.6" y2="132.5"><stop offset="0.00" stop-color="#141414"/><stop offset="0.08" stop-color="#191919"/><stop offset="0.17" stop-color="#1e1e1e"/><stop offset="0.25" stop-color="#232323"/><stop offset="0.33" stop-color="#282828"/><stop offset="0.42" stop-color="#2d2d2d"/><stop offset="0.50" stop-color="#363636"/><stop offset="0.58" stop-color="#3f3f3f"/><stop offset="0.67" stop-color="#474747"/><stop offset="0.75" stop-color="#494949"/><stop offset="0.83" stop-color="#3f3f3f"/><stop offset="0.92" stop-color="#282828"/><stop offset="1.00" stop-color="#000000"/></linearGradient><linearGradient id="g57" gradientUnits="userSpaceOnUse" x1="-301.4" y1="634.0" x2="1476.5" y2="634.0"><stop offset="0.00" stop-color="#000000"/><stop offset="0.08" stop-color="#171717"/><stop offset="0.17" stop-color="#252525"/><stop offset="0.25" stop-color="#333333"/><stop offset="0.33" stop-color="#454545"/><stop offset="0.42" stop-color="#515151"/><stop offset="0.50" stop-color="#555555"/><stop offset="0.58" stop-color="#515151"/><stop offset="0.67" stop-color="#454545"/><stop offset="0.75" stop-color="#333333"/><stop offset="0.83" stop-color="#252525"/><stop offset="0.92" stop-color="#171717"/><stop offset="1.00" stop-color="#000000"/></linearGradient><linearGradient id="g58" gradientUnits="userSpaceOnUse" x1="1348.6" y1="734.5" x2="828.5" y2="132.5"><stop offset="0.00" stop-color="#141414"/><stop offset="0.08" stop-color="#191919"/><stop offset="0.17" stop-color="#1e1e1e"/><stop offset="0.25" stop-color="#232323"/><stop offset="0.33" stop-color="#282828"/><stop offset="0.42" stop-color="#2d2d2d"/><stop offset="0.50" stop-color="#363636"/><stop offset="0.58" stop-color="#3f3f3f"/><stop offset="0.67" stop-color="#474747"/><stop offset="0.75" stop-color="#494949"/><stop offset="0.83" stop-color="#3f3f3f"/><stop offset="0.92" stop-color="#282828"/><stop offset="1.00" stop-color="#000000"/></linearGradient><linearGradient id="g59" gradientUnits="userSpaceOnUse" x1="234.9" y1="163.2" x2="940.2" y2="163.2"><stop offset="0.00" stop-color="#000000"/><stop offset="0.08" stop-color="#171717"/><stop offset="0.17" stop-color="#252525"/><stop offset="0.25" stop-color="#333333"/><stop offset="0.33" stop-color="#454545"/><stop offset="0.42" stop-color="#515151"/><stop offset="0.50" stop-color="#555555"/><stop offset="0.58" stop-color="#515151"/><stop offset="0.67" stop-color="#454545"/><stop offset="0.75" stop-color="#333333"/><stop offset="0.83" stop-color="#252525"/><stop offset="0.92" stop-color="#171717"/><stop offset="1.00" stop-color="#000000"/></linearGradient><linearGradient id="g60" gradientUnits="userSpaceOnUse" x1="587.5" y1="734.5" x2="587.5" y2="106.7"><stop offset="0.00" stop-color="#4c4c4c"/><stop offset="0.08" stop-color="#595959"/><stop offset="0.17" stop-color="#696969"/><stop offset="0.25" stop-color="#7c7c7c"/><stop offset="0.33" stop-color="#909090"/><stop offset="0.42" stop-color="#989898"/><stop offset="0.50" stop-color="#a1a1a1"/><stop offset="0.58" stop-color="#acacac"/><stop offset="0.67" stop-color="#bababa"/><stop offset="0.75" stop-color="#b4b4b4"/><stop offset="0.83" stop-color="#9e9e9e"/><stop offset="0.92" stop-color="#5f5f5f"/><stop offset="1.00" stop-color="#000000"/></linearGradient><linearGradient id="g61" gradientUnits="userSpaceOnUse" x1="-29.5" y1="296.9" x2="1204.6" y2="296.9"><stop offset="0.00" stop-color="#000000"/><stop offset="0.08" stop-color="#262626"/><stop offset="0.17" stop-color="#4a4a4a"/><stop offset="0.25" stop-color="#818181"/><stop offset="0.33" stop-color="#9d9d9d"/><stop offset="0.42" stop-color="#aeaeae"/><stop offset="0.50" stop-color="#bfbfbf"/><stop offset="0.58" stop-color="#aeaeae"/><stop offset="0.67" stop-color="#9d9d9d"/><stop offset="0.75" stop-color="#818181"/><stop offset="0.83" stop-color="#4a4a4a"/><stop offset="0.92" stop-color="#262626"/><stop offset="1.00" stop-color="#000000"/></linearGradient></defs><line x1="-462.0" y1="612.8" x2="57.9" y2="236.8" stroke="url(#g0)" stroke-width="1.9"/><line x1="-554.1" y1="734.5" x2="138.8" y2="199.8" stroke="url(#g1)" stroke-width="1.9"/><line x1="-477.9" y1="734.5" x2="195.8" y2="177.4" stroke="url(#g2)" stroke-width="1.9"/><line x1="-401.8" y1="734.5" x2="241.5" y2="161.7" stroke="url(#g3)" stroke-width="1.9"/><line x1="-325.7" y1="734.5" x2="280.5" y2="149.7" stroke="url(#g4)" stroke-width="1.9"/><line x1="-249.6" y1="734.5" x2="315.0" y2="140.3" stroke="url(#g5)" stroke-width="1.9"/><line x1="-548.9" y1="698.2" x2="1724.0" y2="698.2" stroke="url(#g6)" stroke-width="1.9"/><line x1="-97.4" y1="734.5" x2="375.2" y2="126.6" stroke="url(#g7)" stroke-width="1.9"/><line x1="-425.5" y1="578.9" x2="1600.6" y2="578.9" stroke="url(#g8)" stroke-width="1.9"/><line x1="-21.3" y1="734.5" x2="402.3" y2="121.6" stroke="url(#g9)" stroke-width="1.9"/><line x1="-371.9" y1="531.0" x2="1547.0" y2="531.0" stroke="url(#g10)" stroke-width="1.9"/><line x1="54.8" y1="734.5" x2="428.0" y2="117.4" stroke="url(#g11)" stroke-width="1.9"/><line x1="-322.6" y1="489.0" x2="1497.7" y2="489.0" stroke="url(#g12)" stroke-width="1.9"/><line x1="130.9" y1="734.5" x2="452.6" y2="114.0" stroke="url(#g13)" stroke-width="1.9"/><line x1="-276.9" y1="452.0" x2="1452.0" y2="452.0" stroke="url(#g14)" stroke-width="1.9"/><line x1="207.0" y1="734.5" x2="476.2" y2="111.3" stroke="url(#g15)" stroke-width="1.9"/><line x1="-234.1" y1="419.0" x2="1409.2" y2="419.0" stroke="url(#g16)" stroke-width="1.9"/><line x1="283.1" y1="734.5" x2="499.2" y2="109.1" stroke="url(#g17)" stroke-width="1.9"/><line x1="-194.0" y1="389.5" x2="1369.1" y2="389.5" stroke="url(#g18)" stroke-width="1.9"/><line x1="359.2" y1="734.5" x2="521.7" y2="107.5" stroke="url(#g19)" stroke-width="1.9"/><line x1="-156.1" y1="362.9" x2="1331.2" y2="362.9" stroke="url(#g20)" stroke-width="1.9"/><line x1="435.3" y1="734.5" x2="543.9" y2="106.3" stroke="url(#g21)" stroke-width="1.9"/><line x1="-120.1" y1="338.8" x2="1295.2" y2="338.8" stroke="url(#g22)" stroke-width="1.9"/><line x1="511.4" y1="734.5" x2="565.8" y2="105.7" stroke="url(#g23)" stroke-width="1.9"/><line x1="-85.7" y1="316.9" x2="1260.8" y2="316.9" stroke="url(#g24)" stroke-width="1.9"/><line x1="663.7" y1="734.5" x2="609.3" y2="105.7" stroke="url(#g25)" stroke-width="1.9"/><line x1="-21.1" y1="278.5" x2="1196.2" y2="278.5" stroke="url(#g26)" stroke-width="1.9"/><line x1="739.8" y1="734.5" x2="631.2" y2="106.3" stroke="url(#g27)" stroke-width="1.9"/><line x1="9.6" y1="261.6" x2="1165.5" y2="261.6" stroke="url(#g28)" stroke-width="1.9"/><line x1="815.9" y1="734.5" x2="653.4" y2="107.5" stroke="url(#g29)" stroke-width="1.9"/><line x1="39.4" y1="246.0" x2="1135.7" y2="246.0" stroke="url(#g30)" stroke-width="1.9"/><line x1="892.0" y1="734.5" x2="675.9" y2="109.1" stroke="url(#g31)" stroke-width="1.9"/><line x1="68.5" y1="231.6" x2="1106.6" y2="231.6" stroke="url(#g32)" stroke-width="1.9"/><line x1="968.1" y1="734.5" x2="698.9" y2="111.3" stroke="url(#g33)" stroke-width="1.9"/><line x1="97.0" y1="218.2" x2="1078.1" y2="218.2" stroke="url(#g34)" stroke-width="1.9"/><line x1="1044.2" y1="734.5" x2="722.5" y2="114.0" stroke="url(#g35)" stroke-width="1.9"/><line x1="125.2" y1="205.7" x2="1049.9" y2="205.7" stroke="url(#g36)" stroke-width="1.9"/><line x1="1120.3" y1="734.5" x2="747.1" y2="117.4" stroke="url(#g37)" stroke-width="1.9"/><line x1="153.0" y1="194.0" x2="1022.1" y2="194.0" stroke="url(#g38)" stroke-width="1.9"/><line x1="1196.4" y1="734.5" x2="772.8" y2="121.6" stroke="url(#g39)" stroke-width="1.9"/><line x1="180.8" y1="183.1" x2="994.3" y2="183.1" stroke="url(#g40)" stroke-width="1.9"/><line x1="1272.5" y1="734.5" x2="799.9" y2="126.6" stroke="url(#g41)" stroke-width="1.9"/><line x1="208.7" y1="172.8" x2="966.4" y2="172.8" stroke="url(#g42)" stroke-width="1.9"/><line x1="1424.7" y1="734.5" x2="860.1" y2="140.3" stroke="url(#g43)" stroke-width="1.9"/><line x1="265.7" y1="154.1" x2="909.4" y2="154.1" stroke="url(#g44)" stroke-width="1.9"/><line x1="1500.8" y1="734.5" x2="894.6" y2="149.7" stroke="url(#g45)" stroke-width="1.9"/><line x1="295.4" y1="145.6" x2="879.7" y2="145.6" stroke="url(#g46)" stroke-width="1.9"/><line x1="1576.9" y1="734.5" x2="933.6" y2="161.7" stroke="url(#g47)" stroke-width="1.9"/><line x1="326.5" y1="137.5" x2="848.6" y2="137.5" stroke="url(#g48)" stroke-width="1.9"/><line x1="1653.0" y1="734.5" x2="979.3" y2="177.4" stroke="url(#g49)" stroke-width="1.9"/><line x1="359.7" y1="129.8" x2="815.4" y2="129.8" stroke="url(#g50)" stroke-width="1.9"/><line x1="1729.2" y1="734.5" x2="1036.3" y2="199.8" stroke="url(#g51)" stroke-width="1.9"/><line x1="396.5" y1="122.6" x2="778.6" y2="122.6" stroke="url(#g52)" stroke-width="1.9"/><line x1="1637.1" y1="612.8" x2="1117.2" y2="236.8" stroke="url(#g53)" stroke-width="1.9"/><line x1="439.7" y1="115.7" x2="735.4" y2="115.7" stroke="url(#g54)" stroke-width="1.9"/><line x1="498.1" y1="109.2" x2="677.0" y2="109.2" stroke="url(#g55)" stroke-width="1.9"/><line x1="-173.5" y1="734.5" x2="346.6" y2="132.5" stroke="url(#g56)" stroke-width="2.1"/><line x1="-301.4" y1="634.0" x2="1476.5" y2="634.0" stroke="url(#g57)" stroke-width="2.1"/><line x1="1348.6" y1="734.5" x2="828.5" y2="132.5" stroke="url(#g58)" stroke-width="2.1"/><line x1="234.9" y1="163.2" x2="940.2" y2="163.2" stroke="url(#g59)" stroke-width="2.1"/><line x1="587.5" y1="734.5" x2="587.5" y2="106.7" stroke="url(#g60)" stroke-width="2.4"/><line x1="-29.5" y1="296.9" x2="1204.6" y2="296.9" stroke="url(#g61)" stroke-width="2.4"/></svg><div style="position:absolute;left:0;top:350px;width:1171px;height:240px;background:linear-gradient(to bottom,rgba(255,255,255,0),rgba(255,255,255,0.028))"></div></div>
<div style="position:absolute;left:11.2px;top:52.1px;width:8.600000000000001px;height:1.1px;background:#cfcfcf;"></div>
<div style="position:absolute;left:53.4px;top:52.1px;width:8.600000000000001px;height:1.1px;background:#cfcfcf;"></div>
<div style="position:absolute;left:97.2px;top:52.1px;width:15.599999999999994px;height:1.1px;background:#cfcfcf;"></div>
<div style="position:absolute;left:207.2px;top:52.1px;width:12.300000000000011px;height:1.1px;background:#cfcfcf;"></div>
<div style="position:absolute;left:1791px;top:54px;width:128px;height:2px;background:#1f9a1f;"></div>
<div style="position:absolute;left:252px;top:36px;width:1px;height:12px;background:#393939;"></div>
<div style="position:absolute;left:311px;top:60px;width:84px;height:46px;background:#4a4a4a;"></div>
<div style="position:absolute;left:0px;top:140px;width:114px;height:2px;background:#e8890c;"></div>
<div style="position:absolute;left:1175px;top:140px;width:151px;height:2px;background:#e8890c;"></div>
<div style="position:absolute;left:1175px;top:187px;width:744px;height:28px;background:#3a3a3a;"></div>
<div style="position:absolute;left:1175px;top:215px;width:744px;height:30px;background:#2b2b2b;"></div>
<div style="position:absolute;left:1175px;top:245px;width:744px;height:30px;background:#d2861b;"></div>
<div style="position:absolute;left:1175px;top:275px;width:744px;height:30px;background:#2b2b2b;"></div>
<div style="position:absolute;left:1175px;top:305px;width:744px;height:30px;background:#323232;"></div>
<div style="position:absolute;left:1175px;top:335px;width:744px;height:30px;background:#2b2b2b;"></div>
<div style="position:absolute;left:1175px;top:365px;width:744px;height:30px;background:#323232;"></div>
<div style="position:absolute;left:1175px;top:395px;width:744px;height:30px;background:#2b2b2b;"></div>
<div style="position:absolute;left:1175px;top:425px;width:744px;height:30px;background:#323232;"></div>
<div style="position:absolute;left:1175px;top:455px;width:744px;height:30px;background:#2b2b2b;"></div>
<div style="position:absolute;left:1175px;top:485px;width:744px;height:30px;background:#454545;"></div>
<div style="position:absolute;left:1175px;top:515px;width:744px;height:30px;background:#2b2b2b;"></div>
<div style="position:absolute;left:1175px;top:545px;width:744px;height:30px;background:#323232;"></div>
<div style="position:absolute;left:1175px;top:575px;width:744px;height:30px;background:#2b2b2b;"></div>
<div style="position:absolute;left:1175px;top:605px;width:744px;height:30px;background:#323232;"></div>
<div style="position:absolute;left:1036px;top:700px;width:131px;height:29px;background:#3f3f3f;border-radius:4px 4px 0 0"></div>
<div style="position:absolute;left:0px;top:768px;width:148px;height:2px;background:#e8890c;"></div>
<div style="position:absolute;left:127px;top:775px;width:901px;height:35px;background:#474747;border-radius:4px"></div>
<div style="position:absolute;left:1001px;top:775px;width:27px;height:35px;background:#4c4c4c;border-radius:0 4px 4px 0"></div>
<div style="position:absolute;left:1034px;top:776px;width:56px;height:31px;background:#2d2d2d;box-sizing:border-box;border:1px solid #3c3c3c;border-radius:4px"></div>
<div style="position:absolute;left:0px;top:815px;width:1171px;height:28px;background:#3a3a3a;"></div>
<div style="position:absolute;left:119px;top:784px;width:2px;height:16px;background:#404040;"></div>
<div style="position:absolute;left:0px;top:1071px;width:1171px;height:17px;background:#2e2e2e;box-sizing:border-box;border:1px solid #353535"></div>
<div style="position:absolute;left:1px;top:1072px;width:18px;height:16px;background:#2a2a2a;"></div>
<div style="position:absolute;left:19px;top:1072px;width:556px;height:16px;background:#424242;"></div>
<div style="position:absolute;left:1178px;top:761px;width:123px;height:2px;background:#e8890c;"></div>
<div style="position:absolute;left:1188px;top:776px;width:718px;height:28px;background:#454545;border-radius:4px"></div>
<div style="position:absolute;left:1878px;top:776px;width:28px;height:28px;background:#484848;border-radius:0 4px 4px 0"></div>
<div style="position:absolute;left:1187px;top:819px;width:720px;height:2px;background:#424242;"></div>
<div style="position:absolute;left:1790px;top:833px;width:116px;height:31px;background:#454545;border-radius:4px"></div>
<div style="position:absolute;left:1175px;top:871px;width:744px;height:2px;background:#3a3a3a;"></div>
<div style="position:absolute;left:1175px;top:873px;width:744px;height:34px;background:#323232;"></div>
<div style="position:absolute;left:1179px;top:941px;width:740px;height:1px;background:#3c3c3c;"></div>
<svg style="position:absolute;left:367px;top:1094px;" width="1220" height="45" viewBox="0 0 1220 45"><rect x="-0.3" y="26" width="1" height="19" fill="#404040"/><rect x="11.7" y="26" width="1" height="19" fill="#404040"/><rect x="23.7" y="26" width="1" height="19" fill="#404040"/><rect x="35.6" y="26" width="1" height="19" fill="#404040"/><rect x="47.6" y="26" width="1" height="19" fill="#404040"/><rect x="59.6" y="26" width="1" height="19" fill="#404040"/><rect x="71.5" y="26" width="1" height="19" fill="#404040"/><rect x="83.5" y="26" width="1" height="19" fill="#404040"/><rect x="95.5" y="26" width="1" height="19" fill="#404040"/><rect x="107.4" y="26" width="1" height="19" fill="#404040"/><rect x="119.4" y="26" width="1" height="19" fill="#404040"/><rect x="131.2" y="14" width="1.4" height="31" fill="#484848"/><rect x="143.3" y="26" width="1" height="19" fill="#404040"/><rect x="155.3" y="26" width="1" height="19" fill="#404040"/><rect x="167.2" y="26" width="1" height="19" fill="#404040"/><rect x="179.2" y="26" width="1" height="19" fill="#404040"/><rect x="191.2" y="26" width="1" height="19" fill="#404040"/><rect x="203.1" y="26" width="1" height="19" fill="#404040"/><rect x="215.1" y="26" width="1" height="19" fill="#404040"/><rect x="227.1" y="26" width="1" height="19" fill="#404040"/><rect x="239.0" y="26" width="1" height="19" fill="#404040"/><rect x="250.8" y="14" width="1.4" height="31" fill="#484848"/><rect x="263.0" y="26" width="1" height="19" fill="#404040"/><rect x="274.9" y="26" width="1" height="19" fill="#404040"/><rect x="286.9" y="26" width="1" height="19" fill="#404040"/><rect x="298.9" y="26" width="1" height="19" fill="#404040"/><rect x="310.8" y="26" width="1" height="19" fill="#404040"/><rect x="322.8" y="26" width="1" height="19" fill="#404040"/><rect x="334.8" y="26" width="1" height="19" fill="#404040"/><rect x="346.7" y="26" width="1" height="19" fill="#404040"/><rect x="358.7" y="26" width="1" height="19" fill="#404040"/><rect x="370.4" y="14" width="1.4" height="31" fill="#484848"/><rect x="382.6" y="26" width="1" height="19" fill="#404040"/><rect x="394.6" y="26" width="1" height="19" fill="#404040"/><rect x="406.5" y="26" width="1" height="19" fill="#404040"/><rect x="418.5" y="26" width="1" height="19" fill="#404040"/><rect x="430.5" y="26" width="1" height="19" fill="#404040"/><rect x="442.4" y="26" width="1" height="19" fill="#404040"/><rect x="454.4" y="26" width="1" height="19" fill="#404040"/><rect x="466.4" y="26" width="1" height="19" fill="#404040"/><rect x="478.3" y="26" width="1" height="19" fill="#404040"/><rect x="490.1" y="14" width="1.4" height="31" fill="#484848"/><rect x="502.3" y="26" width="1" height="19" fill="#404040"/><rect x="514.2" y="26" width="1" height="19" fill="#404040"/><rect x="526.2" y="26" width="1" height="19" fill="#404040"/><rect x="538.2" y="26" width="1" height="19" fill="#404040"/><rect x="550.1" y="26" width="1" height="19" fill="#404040"/><rect x="562.1" y="26" width="1" height="19" fill="#404040"/><rect x="574.1" y="26" width="1" height="19" fill="#404040"/><rect x="586.0" y="26" width="1" height="19" fill="#404040"/><rect x="598.0" y="26" width="1" height="19" fill="#404040"/><rect x="609.8" y="14" width="1.4" height="31" fill="#484848"/><rect x="621.9" y="26" width="1" height="19" fill="#404040"/><rect x="633.9" y="26" width="1" height="19" fill="#404040"/><rect x="645.8" y="26" width="1" height="19" fill="#404040"/><rect x="657.8" y="26" width="1" height="19" fill="#404040"/><rect x="669.8" y="26" width="1" height="19" fill="#404040"/><rect x="681.7" y="26" width="1" height="19" fill="#404040"/><rect x="693.7" y="26" width="1" height="19" fill="#404040"/><rect x="705.7" y="26" width="1" height="19" fill="#404040"/><rect x="717.6" y="26" width="1" height="19" fill="#404040"/><rect x="729.4" y="14" width="1.4" height="31" fill="#484848"/><rect x="741.6" y="26" width="1" height="19" fill="#404040"/><rect x="753.5" y="26" width="1" height="19" fill="#404040"/><rect x="765.5" y="26" width="1" height="19" fill="#404040"/><rect x="777.5" y="26" width="1" height="19" fill="#404040"/><rect x="789.4" y="26" width="1" height="19" fill="#404040"/><rect x="801.4" y="26" width="1" height="19" fill="#404040"/><rect x="813.4" y="26" width="1" height="19" fill="#404040"/><rect x="825.3" y="26" width="1" height="19" fill="#404040"/><rect x="837.3" y="26" width="1" height="19" fill="#404040"/><rect x="849.0" y="14" width="1.4" height="31" fill="#484848"/><rect x="861.2" y="26" width="1" height="19" fill="#404040"/><rect x="873.2" y="26" width="1" height="19" fill="#404040"/><rect x="885.1" y="26" width="1" height="19" fill="#404040"/><rect x="897.1" y="26" width="1" height="19" fill="#404040"/><rect x="909.1" y="26" width="1" height="19" fill="#404040"/><rect x="921.0" y="26" width="1" height="19" fill="#404040"/><rect x="933.0" y="26" width="1" height="19" fill="#404040"/><rect x="945.0" y="26" width="1" height="19" fill="#404040"/><rect x="956.9" y="26" width="1" height="19" fill="#404040"/><rect x="968.7" y="14" width="1.4" height="31" fill="#484848"/><rect x="980.9" y="26" width="1" height="19" fill="#404040"/><rect x="992.8" y="26" width="1" height="19" fill="#404040"/><rect x="1004.8" y="26" width="1" height="19" fill="#404040"/><rect x="1016.8" y="26" width="1" height="19" fill="#404040"/><rect x="1028.7" y="26" width="1" height="19" fill="#404040"/><rect x="1040.7" y="26" width="1" height="19" fill="#404040"/><rect x="1052.7" y="26" width="1" height="19" fill="#404040"/><rect x="1064.6" y="26" width="1" height="19" fill="#404040"/><rect x="1076.6" y="26" width="1" height="19" fill="#404040"/><rect x="1088.3" y="14" width="1.4" height="31" fill="#484848"/><rect x="1100.5" y="26" width="1" height="19" fill="#404040"/><rect x="1112.5" y="26" width="1" height="19" fill="#404040"/><rect x="1124.4" y="26" width="1" height="19" fill="#404040"/><rect x="1136.4" y="26" width="1" height="19" fill="#404040"/><rect x="1148.4" y="26" width="1" height="19" fill="#404040"/><rect x="1160.3" y="26" width="1" height="19" fill="#404040"/><rect x="1172.3" y="26" width="1" height="19" fill="#404040"/><rect x="1184.3" y="26" width="1" height="19" fill="#404040"/><rect x="1196.2" y="26" width="1" height="19" fill="#404040"/><rect x="1208.0" y="14" width="1.4" height="31" fill="#484848"/></svg>
<div style="position:absolute;left:376px;top:1105px;width:2.3px;height:34px;background:#35a01f;"></div>
<div style="position:absolute;left:378.3px;top:1098px;width:2px;height:41px;background:#b8920f;"></div>
<div style="position:absolute;left:1736px;top:1094px;width:38px;height:45px;background:#3c3c3c;"></div>
<div style="position:absolute;left:1774px;top:1091px;width:145px;height:49px;background:#2b2b2b;"></div>
<svg style="position:absolute;left:0;top:0" width="1919" height="1142" viewBox="0 0 1919 1142"><defs><radialGradient id="sph" cx="0.36" cy="0.32" r="0.75"><stop offset="0" stop-color="#b0b0b0"/><stop offset="0.25" stop-color="#848484"/><stop offset="1" stop-color="#5e5e5e"/></radialGradient></defs><circle cx="11.9" cy="14" r="9.8" fill="#f5b32c"/><circle cx="11.9" cy="14" r="8.9" fill="#24211f"/><path d="M8.1 6.9 Q11.9 5.7 15.8 6.9 L13.8 10.9 H10.1 Z" fill="#fdc433" /><path d="M3.5 13.2 Q11.9 11.0 20.3 13.2 A8.6 8.6 0 0 1 18.0 19.4 Q16.4 14.3 11.9 14.3 Q7.4 14.3 5.8 19.4 A8.6 8.6 0 0 1 3.5 13.2 Z" fill="#fbb62e" /><ellipse cx="11.9" cy="17.5" rx="1.9" ry="1.15" fill="#fbb62e"/><path d="M1765 13.5H1777" fill="none" stroke="#1b1b1b" stroke-width="1" stroke-linecap="butt" stroke-linejoin="round" /><rect x="1823.5" y="10.5" width="9" height="9" rx="2" fill="none" stroke="#1b1b1b" stroke-width="1.1"/><path d="M1826 8.6H1831.5Q1834.5 8.6 1834.5 11.6V17" fill="none" stroke="#1b1b1b" stroke-width="1.1" stroke-linecap="butt" stroke-linejoin="round" /><path d="M1882.3 8.3L1893.7 19.7M1893.7 8.3L1882.3 19.7" fill="none" stroke="#1b1b1b" stroke-width="1.1" stroke-linecap="butt" stroke-linejoin="round" /><path d="M1779.5 36.2 Q1779.5 35.2 1780.3 36.2 Q1784.3 37.5 1784.3 42.5 Q1784.3 46.8 1785.8 48.3 V49.2 H1773.2 V48.3 Q1774.7 46.8 1774.7 42.5 Q1774.7 37.5 1778.7 36.2 Z" fill="#fbb034" /><circle cx="1779.5" cy="36" r="1.1" fill="#fbb034"/><path d="M1777.6 50.2 H1781.4 Q1781 52 1779.5 52 Q1778 52 1777.6 50.2Z" fill="#fbb034" /><g ><path d="M282.2 47.2 Q282.4 39.2 275.2 39 Q270.8 39 268.8 43.8" fill="none" stroke="#c0c0c0" stroke-width="2.5" stroke-linecap="butt"/><path d="M265 41.8 L273 43.9 L268 47.7 Z" fill="#c0c0c0"/></g><g transform="translate(579.9,0) scale(-1,1)"><path d="M282.2 47.2 Q282.4 39.2 275.2 39 Q270.8 39 268.8 43.8" fill="none" stroke="#8c8c8c" stroke-width="2.5" stroke-linecap="butt"/><path d="M265 41.8 L273 43.9 L268 47.7 Z" fill="#8c8c8c"/></g><circle cx="420.2" cy="83.1" r="8.7" fill="#bebebe"/><path d="M420.2 78V88.2M415.1 83.1H425.3" fill="none" stroke="#323232" stroke-width="2.4" stroke-linecap="butt" stroke-linejoin="round" /><path d="M91.0 120.0L102.0 131.0M102.0 120.0L91.0 131.0" stroke="#c2c2c2" stroke-width="3.4" stroke-linecap="round" fill="none"/><path d="M242.2 120.0L253.2 131.0M253.2 120.0L242.2 131.0" stroke="#c2c2c2" stroke-width="3.4" stroke-linecap="round" fill="none"/><path d="M1303.1 120.0L1314.1 131.0M1314.1 120.0L1303.1 131.0" stroke="#c2c2c2" stroke-width="3.4" stroke-linecap="round" fill="none"/><path d="M125.1 748.1L136.1 759.1M136.1 748.1L125.1 759.1" stroke="#c2c2c2" stroke-width="3.4" stroke-linecap="round" fill="none"/><path d="M281.1 748.1L292.1 759.1M292.1 748.1L281.1 759.1" stroke="#c2c2c2" stroke-width="3.4" stroke-linecap="round" fill="none"/><path d="M353.1 748.1L364.1 759.1M364.1 748.1L353.1 759.1" stroke="#c2c2c2" stroke-width="3.4" stroke-linecap="round" fill="none"/><path d="M1278.0 741.3L1289.0 752.3M1289.0 741.3L1278.0 752.3" stroke="#c2c2c2" stroke-width="3.4" stroke-linecap="round" fill="none"/><rect x="916" y="114" width="18" height="18" rx="1.5" fill="#8a8a8a"/><rect x="918.6" y="116.6" width="5.5" height="5.2" rx="0.5" fill="#cfcfd4"/><rect x="918.6" y="124.2" width="5.5" height="5.2" rx="0.5" fill="#cfcfd4"/><rect x="926.2" y="116.6" width="5.5" height="5.2" rx="0.5" fill="#cfcfd4"/><rect x="926.2" y="124.2" width="5.5" height="5.2" rx="0.5" fill="#cfcfd4"/><rect x="944.6" y="114.9" width="16" height="16.3" rx="0.8" fill="#2b2b2b" stroke="#b4b4b4" stroke-width="1.4"/><path d="M945.5 130.5 L945.5 126.5 L948.5 121.5 L951 125 L955.5 117.5 L960 125.5 L960 130.5 Z" fill="#8a8a8a" /><path d="M952.8 124.6 Q950 127.6 953.2 129.2 Q956.4 130.4 958.8 130.6" fill="none" stroke="#d6d6d6" stroke-width="2" stroke-linecap="butt" stroke-linejoin="round" /><path d="M972.5 131.7 V127.5 L976.8 121 L979.3 124.5 L984.3 117.5 L990.3 127 V131.7 Z" fill="#8a8a8a" /><path d="M982 124.4 Q979 127.6 982.4 129.4 Q985.6 130.8 988.2 131.2" fill="none" stroke="#d6d6d6" stroke-width="2" stroke-linecap="butt" stroke-linejoin="round" /><rect x="999.2" y="117" width="1.6" height="12.7" rx="0" fill="#3c3c3c"/><rect x="1013" y="122.6" width="11.6" height="8.6" rx="0.8" fill="#8a8a8a"/><circle cx="1014.2" cy="121" r="3" fill="#a2a2a2"/><circle cx="1023.4" cy="119.3" r="4.7" fill="#e2e2e2"/><rect x="1025.2" y="125" width="1.8" height="4.2" rx="0" fill="#9a9a9a"/><path d="M1021.8 131.2H1031.3L1026.55 135.9Z" fill="#b0b0b0"/><path d="M1042.9 118.4 A7 7 0 1 0 1051.3 118.4" fill="none" stroke="#dcdcdc" stroke-width="2.1" stroke-linecap="round" stroke-linejoin="round" /><path d="M1047.1 114.6V124" fill="none" stroke="#9a9a9a" stroke-width="2.3" stroke-linecap="butt" stroke-linejoin="round" /><path d="M1050.8 131.2H1059L1054.9 135.9Z" fill="#b0b0b0"/><rect x="1065.3" y="116" width="1.5" height="13" rx="0" fill="#3a3a3a"/><path d="M1084.6 117.4 A7.6 7.6 0 1 0 1091.7 121.2" fill="none" stroke="#a8a8a8" stroke-width="2.1" stroke-linecap="butt" stroke-linejoin="round" /><path d="M1082.6 113.2 L1089.6 117.3 L1082.6 121 Z" fill="#a8a8a8" /><path d="M1085 123.4 L1092.4 130.8" fill="none" stroke="#e8e8e8" stroke-width="2" stroke-linecap="round" stroke-linejoin="round" /><path d="M1084.4 122.8 L1087.6 126" fill="none" stroke="#ffffff" stroke-width="2.8" stroke-linecap="round" stroke-linejoin="round" /><path d="M1089 131.2H1097.3L1093.15 135.9Z" fill="#b0b0b0"/><rect x="1104" y="114" width="18.3" height="17.6" rx="1" fill="#a8a8a8"/><rect x="1106.9" y="117" width="12.5" height="11.8" rx="0.5" fill="#dedede"/><path d="M1116 131.2H1125L1120.5 135.9Z" fill="#b0b0b0"/><rect x="1131.4" y="118.6" width="1.4" height="9.2" rx="0" fill="#444"/><rect x="1147.5" y="117.5" width="6.4" height="5.7" rx="0.6" fill="#bcbcbc"/><rect x="1147.5" y="125.2" width="6.4" height="5.7" rx="0.6" fill="#bcbcbc"/><rect x="1155.7" y="117.5" width="6.1" height="13.4" rx="0.6" fill="#bcbcbc"/><rect x="1854.3" y="117.2" width="12.6" height="12" rx="0.8" fill="none" stroke="#a8a8a8" stroke-width="1.5"/><path d="M1858.5 117.4V128.9" fill="none" stroke="#a8a8a8" stroke-width="1.4" stroke-linecap="butt" stroke-linejoin="round" /><rect x="1863.6" y="116.60000000000001" width="4" height="13.2" rx="0.6" fill="#d6d6d6"/><path d="M1864.5 128.0H1873.1L1868.8 133.0Z" fill="#c8c8c8"/><rect x="1879.3" y="119.4" width="1.2" height="8.5" rx="0" fill="#444"/><rect x="1895.6" y="117.4" width="6.4" height="5.7" rx="0.6" fill="#bcbcbc"/><rect x="1895.6" y="125.10000000000001" width="6.4" height="5.7" rx="0.6" fill="#bcbcbc"/><rect x="1903.8" y="117.4" width="6.1" height="13.4" rx="0.6" fill="#bcbcbc"/><circle cx="1901.8" cy="162.5" r="4.9" fill="none" stroke="#bdbdbd" stroke-width="3.8"/><path d="M1906.0 166.6L1909.8999999999999 170.1" fill="none" stroke="#bdbdbd" stroke-width="3.8" stroke-linecap="round" stroke-linejoin="round" /><circle cx="1193.6" cy="158.2" r="6" fill="#8a8a8a"/><circle cx="1188.0" cy="161.39999999999998" r="5.2" fill="#8a8a8a"/><circle cx="1198.3999999999999" cy="161.79999999999998" r="4.8" fill="#8a8a8a"/><rect x="1187.8" y="160.2" width="11" height="6.4" rx="0" fill="#8a8a8a"/><path d="M1193.1 159.79999999999998V173.2" fill="none" stroke="#e8e8e8" stroke-width="3.1" stroke-linecap="round" stroke-linejoin="round" /><path d="M1188.0 168.79999999999998L1193.1 173.79999999999998L1198.2 168.79999999999998" fill="none" stroke="#e8e8e8" stroke-width="3.1" stroke-linecap="round" stroke-linejoin="round" /><path d="M1220.2 154 H1234.5 L1240 159.5 V174.3 Q1240 175.3 1239 175.3 H1220.2 Q1219.2 175.3 1219.2 174.3 V155 Q1219.2 154 1220.2 154Z" fill="#8a8a8a" /><rect x="1221.6" y="157.2" width="12" height="5.4" rx="1.6" fill="#dedede"/><circle cx="1229.5" cy="169" r="3" fill="#dedede"/><path d="M1256.3 157.2 Q1256.3 156.2 1257.3 156.2 H1262 L1264 158.4 H1272.6 Q1273.6 158.4 1273.6 159.4 V164 H1259 L1256.3 171 Z" fill="#8a8a8a" /><path d="M1260.2 163.4 H1277.2 L1273.4 172.9 H1256.2 Z" fill="#e4e4e4" stroke="#e4e4e4" stroke-width="0.8" stroke-linecap="round" stroke-linejoin="round" /><path d="M1295.2 167.2V171.3Q1295.2 172.9 1296.8000000000002 172.9H1312.0Q1313.6000000000001 172.9 1313.6000000000001 171.3V167.2" fill="none" stroke="#b4b4b4" stroke-width="2.7" stroke-linecap="round" stroke-linejoin="round" /><path d="M1304.5 168.3V155" fill="none" stroke="#ececec" stroke-width="3.3" stroke-linecap="round" stroke-linejoin="round" /><path d="M1299 160.4L1304.5 154.8L1310 160.4" fill="none" stroke="#ececec" stroke-width="3.3" stroke-linecap="round" stroke-linejoin="round" /><path d="M1332.3999999999999 167.2V171.3Q1332.3999999999999 172.9 1334.0 172.9H1349.1999999999998Q1350.8 172.9 1350.8 171.3V167.2" fill="none" stroke="#b4b4b4" stroke-width="2.7" stroke-linecap="round" stroke-linejoin="round" /><path d="M1341.7 155.2V168" fill="none" stroke="#ececec" stroke-width="3.3" stroke-linecap="round" stroke-linejoin="round" /><path d="M1336.2 162.6L1341.7 168.2L1347.2 162.6" fill="none" stroke="#ececec" stroke-width="3.3" stroke-linecap="round" stroke-linejoin="round" /><rect x="1364" y="154.5" width="1.5" height="19" rx="0" fill="#3c3c3c"/><path d="M1381 162.7L1387.7 168.6L1394.4 162.7" fill="none" stroke="#b4b4b4" stroke-width="3.6" stroke-linecap="round" stroke-linejoin="round" /><path d="M1418.1 168.1L1424.8 162.2L1431.5 168.1" fill="none" stroke="#b4b4b4" stroke-width="3.6" stroke-linecap="round" stroke-linejoin="round" /><rect x="1186.4" y="215" width="1.3" height="7" rx="0" fill="#858585"/><rect x="1186.4" y="238" width="1.3" height="43" rx="0" fill="#858585"/><rect x="1186.4" y="299" width="1.3" height="12" rx="0" fill="#858585"/><rect x="1186.4" y="329" width="1.3" height="12" rx="0" fill="#858585"/><rect x="1186.4" y="358" width="1.3" height="263" rx="0" fill="#a8a8a8"/><rect x="1187" y="620.0" width="11" height="1.3" rx="0" fill="#9c9c9c"/><rect x="1211.0" y="245" width="1.3" height="16.600000000000023" rx="0" fill="#b9a184"/><rect x="1211.6" y="260.4" width="11.600000000000136" height="1.3" rx="0" fill="#b9a184"/><rect x="1211.2" y="365" width="1.3" height="226.60000000000002" rx="0" fill="#9c9c9c"/><rect x="1212" y="379.79999999999995" width="11" height="1.3" rx="0" fill="#9c9c9c"/><rect x="1212" y="409.79999999999995" width="11" height="1.3" rx="0" fill="#9c9c9c"/><rect x="1212" y="439.79999999999995" width="11" height="1.3" rx="0" fill="#9c9c9c"/><rect x="1212" y="469.79999999999995" width="11" height="1.3" rx="0" fill="#9c9c9c"/><rect x="1212" y="499.79999999999995" width="11" height="1.3" rx="0" fill="#9c9c9c"/><rect x="1212" y="529.8" width="11" height="1.3" rx="0" fill="#9c9c9c"/><rect x="1212" y="559.8" width="11" height="1.3" rx="0" fill="#9c9c9c"/><rect x="1212" y="589.8" width="11" height="1.3" rx="0" fill="#9c9c9c"/><path d="M1181 226.2H1193.2L1187.1 233.2Z" fill="#8e8e8e"/><path d="M1181 346.2H1193.2L1187.1 353.2Z" fill="#8e8e8e"/><path d="M1184.2 284V296.6L1191.2 290.3Z" fill="#8e8e8e"/><path d="M1184.2 314V326.6L1191.2 320.3Z" fill="#8e8e8e"/><rect x="1208.8" y="223.2" width="12.9" height="6.6" rx="1.2" fill="#fbb034"/><rect x="1208.8" y="231.5" width="12.9" height="6.6" rx="1.2" fill="#fbb034"/><rect x="1214.3999999999999" y="225.2" width="6.2" height="2.6" rx="0.5" fill="#9c7210"/><rect x="1214.3999999999999" y="233.5" width="6.2" height="2.6" rx="0.5" fill="#9c7210"/><rect x="1210.2" y="225.5" width="2.2" height="2" rx="0.5" fill="#ffe08a"/><rect x="1210.2" y="233.79999999999998" width="2.2" height="2" rx="0.5" fill="#ffe08a"/><rect x="1209" y="283.5" width="8.2" height="3.8" rx="0.4" fill="#cfcfcf"/><rect x="1218.2" y="283.5" width="3.6" height="3.8" rx="0.4" fill="#555"/><rect x="1209" y="288.3" width="4" height="3.8" rx="0.4" fill="#6a6a6a"/><rect x="1214" y="288.3" width="7.8" height="3.8" rx="0.4" fill="#606060"/><rect x="1209" y="293.2" width="7.4" height="4.2" rx="0.4" fill="#7c7c7c"/><rect x="1217.4" y="293" width="4.6" height="4.5" rx="0.4" fill="#e0e0e0"/><rect x="1210" y="319.8" width="11.3" height="8" rx="0.8" fill="#6e6e6e"/><circle cx="1210.6" cy="318.6" r="2.6" fill="#6e6e6e"/><circle cx="1218.7" cy="317.1" r="4.3" fill="#d2d2d2"/><path d="M1215.6 342.8 A5.6 5.6 0 0 1 1219.2 352.6 Q1218.6 353.6 1218.6 355 H1212.6 Q1212.6 353.6 1212 352.6 A5.6 5.6 0 0 1 1215.6 342.8Z" fill="#fbe58c" /><rect x="1213" y="355.4" width="5.2" height="2.4" rx="0.8" fill="#e8890c"/><rect x="1214.6" y="347.6" width="2" height="4.6" rx="0.6" fill="#b89a30"/><circle cx="1240.6" cy="380.7" r="7.4" fill="url(#sph)"/><circle cx="1215.7" cy="620.9" r="7.4" fill="url(#sph)"/><path d="M1233.6 408 L1241.4 406 V416 L1233.6 414.6Z" fill="#b4b4b4" /><path d="M1237 405.6 L1244.6 404.2 V413.4 L1242.4 413.8 V405.6Z" fill="#a0a0a0" /><path d="M1240.4 404 L1247.8 403.4 V411.6 L1245.6 412 V404.4Z" fill="#c4c4c4" /><path d="M1233.6 408 L1241.4 406 V416 L1233.6 414.6Z" fill="none" stroke="#9a9a9a" stroke-width="0.6" stroke-linecap="round" stroke-linejoin="round" /><path d="M1240.5 433V448M1233 440.5H1248" fill="none" stroke="#c8c8c8" stroke-width="1.6" stroke-linecap="butt" stroke-linejoin="round" /><path d="M1237.3 436.2L1240.5 432.6L1243.7 436.2ZM1237.3 444.8L1240.5 448.4L1243.7 444.8ZM1236.6 437.3L1233 440.5L1236.6 443.7ZM1244.4 437.3L1248 440.5L1244.4 443.7Z" fill="#c8c8c8" /><circle cx="1057.1" cy="713.8" r="6.9" fill="#1f9a1f"/><path d="M1145.8 711.3H1158.8L1152.3 717.9Z" fill="#7c7c7c"/><circle cx="16.1" cy="751" r="7" fill="#1f9a1f"/><rect x="1106.3999999999999" y="745.0999999999999" width="12.6" height="12" rx="0.8" fill="none" stroke="#a8a8a8" stroke-width="1.5"/><path d="M1110.6 745.3V756.8" fill="none" stroke="#a8a8a8" stroke-width="1.4" stroke-linecap="butt" stroke-linejoin="round" /><rect x="1115.6999999999998" y="744.5" width="4" height="13.2" rx="0.6" fill="#d6d6d6"/><path d="M1116.6 755.9H1125.1999999999998L1120.8999999999999 760.9Z" fill="#c8c8c8"/><rect x="1131.5" y="747" width="1.2" height="9" rx="0" fill="#444"/><rect x="1147.3" y="745.3" width="6.4" height="5.7" rx="0.6" fill="#bcbcbc"/><rect x="1147.3" y="753.0" width="6.4" height="5.7" rx="0.6" fill="#bcbcbc"/><rect x="1155.5" y="745.3" width="6.1" height="13.4" rx="0.6" fill="#bcbcbc"/><path d="M30.2 790.9 A8.8 8.8 0 1 1 20.1 785.3" fill="none" stroke="#b4b4b4" stroke-width="2.1" stroke-linecap="butt" stroke-linejoin="round" /><path d="M18.5 781.3 L25.9 784.5 L20.7 789.1 Z" fill="#b4b4b4" /><circle cx="59.599999999999994" cy="786.2" r="6" fill="#8a8a8a"/><circle cx="54.0" cy="789.4000000000001" r="5.2" fill="#8a8a8a"/><circle cx="64.39999999999999" cy="789.8000000000001" r="4.8" fill="#8a8a8a"/><rect x="53.8" y="788.2" width="11" height="6.4" rx="0" fill="#8a8a8a"/><path d="M59.099999999999994 787.8000000000001V801.2" fill="none" stroke="#e8e8e8" stroke-width="3.1" stroke-linecap="round" stroke-linejoin="round" /><path d="M54.0 796.8000000000001L59.099999999999994 801.8000000000001L64.2 796.8000000000001" fill="none" stroke="#e8e8e8" stroke-width="3.1" stroke-linecap="round" stroke-linejoin="round" /><path d="M104.3 790.9 A8.8 8.8 0 1 1 94.2 785.3" fill="none" stroke="#8a8a8a" stroke-width="2.1" stroke-linecap="butt" stroke-linejoin="round" /><path d="M92.6 781.3 L100 784.5 L94.8 789.1 Z" fill="#8a8a8a" /><circle cx="96.4" cy="794.2" r="4.3" fill="#ececec" stroke="#ececec" stroke-width="1.5" stroke-dasharray="1.5 1.1"/><path d="M93.4 798.4L92.6 802.6L94.9 801.4L96.4 802.4L97.9 801.4L100.2 802.6L99.4 798.4Z" fill="#ececec" /><path d="M1009 788.5H1020.6L1014.8 795Z" fill="#7a7a7a"/><circle cx="1149.8" cy="790.5" r="4.9" fill="none" stroke="#bdbdbd" stroke-width="3.8"/><path d="M1154.0 794.6L1157.8999999999999 798.1" fill="none" stroke="#bdbdbd" stroke-width="3.8" stroke-linecap="round" stroke-linejoin="round" /><path d="M13 1074.6V1085L4.6 1079.8Z" fill="#7a7a7a"/><rect x="1153" y="1072" width="17" height="16" rx="0" fill="#2a2a2a"/><path d="M1158.2 1074.7V1085L1166.2 1079.85Z" fill="#7a7a7a"/><rect x="1895.3" y="738.2" width="6.4" height="5.7" rx="0.6" fill="#bcbcbc"/><rect x="1895.3" y="745.9000000000001" width="6.4" height="5.7" rx="0.6" fill="#bcbcbc"/><rect x="1903.5" y="738.2" width="6.1" height="13.4" rx="0.6" fill="#bcbcbc"/><circle cx="1203.1" cy="792.2" r="6.9" fill="#8a8a8a"/><path d="M1885 787H1898L1891.5 792.8Z" fill="#7c7c7c"/><rect x="1182.8" y="883" width="12.9" height="6.6" rx="1.2" fill="#c6c6c6"/><rect x="1182.8" y="891.3" width="12.9" height="6.6" rx="1.2" fill="#c6c6c6"/><rect x="1188.3999999999999" y="885" width="6.2" height="2.6" rx="0.5" fill="#909090"/><rect x="1188.3999999999999" y="893.3" width="6.2" height="2.6" rx="0.5" fill="#909090"/><rect x="1184.2" y="885.3" width="2.2" height="2" rx="0.5" fill="#efefef"/><rect x="1184.2" y="893.6" width="2.2" height="2" rx="0.5" fill="#efefef"/><path d="M1289 886.4V894.4L1295.5 890.4Z" fill="#7a7a7a"/><path d="M1197 916.4V932M1188.8 924.2H1205.2" fill="none" stroke="#bcbcbc" stroke-width="3.2" stroke-linecap="butt" stroke-linejoin="round" /><path d="M1899.6 884.6L1910.4 895.4M1910.4 884.6L1899.6 895.4" fill="none" stroke="#c4c4c4" stroke-width="2.8" stroke-linecap="butt" stroke-linejoin="round" /><path d="M13.3 1109.2H22.4V1117.5L17.2 1123.2L13.3 1118.6Z" fill="#dcdcdc" /><path d="M30.8 1108.1V1123.8L18.1 1115.9499999999998Z" fill="#a0a0a0"/><path d="M59.3 1116L64.3 1111L69.3 1116L64.3 1121Z" fill="#dcdcdc" /><path d="M74.9 1108.8V1123.3L66 1116.05Z" fill="#aaaaaa"/><rect x="105.8" y="1108.1" width="3.8" height="15.7" rx="0.6" fill="#d0d0d0"/><path d="M119 1108.8V1123.1L110.5 1115.9499999999998Z" fill="#777777"/><rect x="149.3" y="1107.8" width="16.3" height="16" rx="3" fill="#707070"/><path d="M195.4 1108V1124L209.4 1116.0Z" fill="#707070"/><path d="M240.7 1108.8V1123.1L249.4 1115.9499999999998Z" fill="#777777"/><rect x="250.4" y="1108.1" width="3.8" height="15.7" rx="0.6" fill="#d0d0d0"/><path d="M283.4 1108.8V1123.3L292.3 1116.05Z" fill="#aaaaaa"/><path d="M289.9 1116L294.9 1111L299.9 1116L294.9 1121Z" fill="#dcdcdc" /><path d="M328 1108.1V1123.8L340.8 1115.9499999999998Z" fill="#a0a0a0"/><path d="M346.2 1109.2H337.1V1112.6L340.8 1116L337.6 1119L341.8 1123.2L346.2 1118.6Z" fill="#dcdcdc" /><path d="M1606 1111H1625" fill="none" stroke="#ffe89a" stroke-width="2.7" stroke-linecap="round" stroke-linejoin="round" /><path d="M1620 1106.2L1626 1111L1620 1115.8" fill="none" stroke="#ffe89a" stroke-width="2.7" stroke-linecap="round" stroke-linejoin="round" /><path d="M1626 1117.2Q1625 1125.6 1617 1125.4Q1611 1125 1609.4 1118.6" fill="none" stroke="#fbb034" stroke-width="2.8" stroke-linecap="round" stroke-linejoin="round" /><path d="M1605.6 1122L1609.3 1117.6L1614 1120.4" fill="none" stroke="#fbb034" stroke-width="2.8" stroke-linecap="round" stroke-linejoin="round" /><path d="M1656.6 1110.3H1669.8M1652.8 1116.2H1668.6M1651.4 1122.1H1661" fill="none" stroke="#fbb034" stroke-width="3.2" stroke-linecap="round" stroke-linejoin="round" /><path d="M1660.3 1106.6V1125.6" fill="none" stroke="#ffe89a" stroke-width="2.5" stroke-linecap="round" stroke-linejoin="round" /><path d="M1693.8 1119.6 A12.25 12.6 0 0 1 1718.3 1119.6 V1123.3 Q1718.3 1125.3 1716.3 1125.3 H1695.8 Q1693.8 1125.3 1693.8 1123.3Z" fill="#b4b4b4" /><path d="M1705.2 1120.2L1714.2 1111.8" fill="none" stroke="#e8e8e8" stroke-width="2.2" stroke-linecap="round" stroke-linejoin="round" /><path d="M1717.9 1130H1727L1722.45 1134.9Z" fill="#b0b0b0"/><rect x="49" y="658" width="2" height="24" rx="0" fill="#00ff00"/><rect x="47.4" y="661" width="5.2" height="2.2" rx="0" fill="#00ff00"/><rect x="51" y="681" width="20" height="2" rx="0" fill="#ff0000"/><rect x="66.6" y="679.6" width="2.2" height="4.8" rx="0" fill="#ff0000"/><rect x="29" y="681" width="20" height="2" rx="0" fill="#6b4c4c"/><rect x="31" y="679.6" width="1.6" height="4.8" rx="0" fill="#6b4c4c"/><rect x="49" y="682" width="2" height="17" rx="0" fill="#0000ff"/><rect x="47" y="694" width="6" height="3.6" rx="0" fill="#0000ff"/></svg>
<div style="position:absolute;left:28.50px;top:-5.20px;font-family:'Liberation Sans',sans-serif;font-size:15px;font-weight:400;line-height:40px;height:40px;white-space:pre;letter-spacing:-0.433px;color:#1b1b1b">Nuke Stage 1.0v1</div>
<div style="position:absolute;left:10.25px;top:26.00px;font-family:'Liberation Sans',sans-serif;font-size:16.8px;font-weight:400;line-height:40px;height:40px;white-space:pre;letter-spacing:0.000px;color:#dedede">File</div>
<div style="position:absolute;left:52.50px;top:26.00px;font-family:'Liberation Sans',sans-serif;font-size:16.8px;font-weight:400;line-height:40px;height:40px;white-space:pre;letter-spacing:0.167px;color:#dedede">Edit</div>
<div style="position:absolute;left:97.25px;top:26.00px;font-family:'Liberation Sans',sans-serif;font-size:16.8px;font-weight:400;line-height:40px;height:40px;white-space:pre;letter-spacing:0.250px;color:#dedede">Workspaces</div>
<div style="position:absolute;left:206.30px;top:26.00px;font-family:'Liberation Sans',sans-serif;font-size:16.8px;font-weight:400;line-height:40px;height:40px;white-space:pre;letter-spacing:0.833px;color:#dedede">Help</div>
<div style="position:absolute;left:1827.80px;top:23.00px;font-family:'Liberation Sans',sans-serif;font-size:16.4px;font-weight:400;line-height:40px;height:40px;white-space:pre;letter-spacing:0.700px;color:#dedede">Project</div>
<div style="position:absolute;left:15.30px;top:64.00px;font-family:'Liberation Sans',sans-serif;font-size:19.6px;font-weight:400;line-height:40px;height:40px;white-space:pre;letter-spacing:0.125px;color:#dedede">Scene</div>
<div style="position:absolute;left:107.50px;top:64.00px;font-family:'Liberation Sans',sans-serif;font-size:19.6px;font-weight:400;line-height:40px;height:40px;white-space:pre;letter-spacing:1.000px;color:#dedede">Comp</div>
<div style="position:absolute;left:198.50px;top:64.00px;font-family:'Liberation Sans',sans-serif;font-size:19.6px;font-weight:400;line-height:40px;height:40px;white-space:pre;letter-spacing:0.257px;color:#dedede">Sequence</div>
<div style="position:absolute;left:324.70px;top:64.00px;font-family:'Liberation Sans',sans-serif;font-size:19.6px;font-weight:400;line-height:40px;height:40px;white-space:pre;letter-spacing:0.450px;color:#dedede">Setup</div>
<div style="position:absolute;left:6.10px;top:106.00px;font-family:'Liberation Sans',sans-serif;font-size:16.8px;font-weight:400;line-height:40px;height:40px;white-space:pre;letter-spacing:0.686px;color:#dedede">Viewport</div>
<div style="position:absolute;left:119.80px;top:106.00px;font-family:'Liberation Sans',sans-serif;font-size:16.8px;font-weight:400;line-height:40px;height:40px;white-space:pre;letter-spacing:0.373px;color:#dedede">Image Viewer</div>
<div style="position:absolute;left:1180.70px;top:106.00px;font-family:'Liberation Sans',sans-serif;font-size:16.8px;font-weight:400;line-height:40px;height:40px;white-space:pre;letter-spacing:0.317px;color:#dedede">Project Graph</div>
<div style="position:absolute;left:1198.90px;top:182.00px;font-family:'Liberation Sans',sans-serif;font-size:16.8px;font-weight:400;line-height:40px;height:40px;white-space:pre;letter-spacing:0.767px;color:#dedede">Name</div>
<div style="position:absolute;left:1231.80px;top:212.00px;font-family:'Liberation Sans',sans-serif;font-size:16.8px;font-weight:400;line-height:40px;height:40px;white-space:pre;letter-spacing:1.000px;color:#dedede">Network</div>
<div style="position:absolute;left:1230.10px;top:242.00px;font-family:'Liberation Sans',sans-serif;font-size:16.8px;font-weight:400;line-height:40px;height:40px;white-space:pre;letter-spacing:0.380px;color:#33260f">RenderNodes</div>
<div style="position:absolute;left:1231.80px;top:272.00px;font-family:'Liberation Sans',sans-serif;font-size:16.8px;font-weight:400;line-height:40px;height:40px;white-space:pre;letter-spacing:0.629px;color:#dedede">Hardware</div>
<div style="position:absolute;left:1232.80px;top:302.00px;font-family:'Liberation Sans',sans-serif;font-size:16.8px;font-weight:400;line-height:40px;height:40px;white-space:pre;letter-spacing:0.180px;color:#dedede">Camera</div>
<div style="position:absolute;left:1231.80px;top:332.00px;font-family:'Liberation Sans',sans-serif;font-size:16.8px;font-weight:400;line-height:40px;height:40px;white-space:pre;letter-spacing:-0.100px;color:#dedede">Scene</div>
<div style="position:absolute;left:1256.70px;top:362.00px;font-family:'Liberation Sans',sans-serif;font-size:16.8px;font-weight:400;line-height:40px;height:40px;white-space:pre;letter-spacing:0.543px;color:#dedede">Renderer</div>
<div style="position:absolute;left:1257.70px;top:392.00px;font-family:'Liberation Sans',sans-serif;font-size:16.8px;font-weight:400;line-height:40px;height:40px;white-space:pre;letter-spacing:-0.425px;color:#dedede">USD stage</div>
<div style="position:absolute;left:1256.70px;top:422.00px;font-family:'Liberation Sans',sans-serif;font-size:16.8px;font-weight:400;line-height:40px;height:40px;white-space:pre;letter-spacing:0.464px;color:#dedede">Stage transform</div>
<div style="position:absolute;left:1229.40px;top:452.00px;font-family:'Liberation Sans',sans-serif;font-size:16.8px;font-weight:400;line-height:40px;height:40px;white-space:pre;letter-spacing:0.175px;color:#dedede">Sequences</div>
<div style="position:absolute;left:1230.00px;top:482.00px;font-family:'Liberation Sans',sans-serif;font-size:16.8px;font-weight:400;line-height:40px;height:40px;white-space:pre;letter-spacing:0.400px;color:#dedede">Node graphs</div>
<div style="position:absolute;left:1230.70px;top:512.00px;font-family:'Liberation Sans',sans-serif;font-size:16.8px;font-weight:400;line-height:40px;height:40px;white-space:pre;letter-spacing:0.575px;color:#dedede">Texture overrides</div>
<div style="position:absolute;left:1230.70px;top:542.00px;font-family:'Liberation Sans',sans-serif;font-size:16.8px;font-weight:400;line-height:40px;height:40px;white-space:pre;letter-spacing:0.413px;color:#dedede">Camera overrides</div>
<div style="position:absolute;left:1230.00px;top:572.00px;font-family:'Liberation Sans',sans-serif;font-size:16.8px;font-weight:400;line-height:40px;height:40px;white-space:pre;letter-spacing:0.319px;color:#dedede">Display overrides</div>
<div style="position:absolute;left:1231.50px;top:602.00px;font-family:'Liberation Sans',sans-serif;font-size:16.8px;font-weight:400;line-height:40px;height:40px;white-space:pre;letter-spacing:0.043px;color:#dedede">Playback</div>
<div style="position:absolute;left:1073.20px;top:695.80px;font-family:'Liberation Sans',sans-serif;font-size:16.8px;font-weight:400;line-height:40px;height:40px;white-space:pre;letter-spacing:0.200px;color:#dedede">Freecam</div>
<div style="position:absolute;left:35.70px;top:733.80px;font-family:'Liberation Sans',sans-serif;font-size:16.8px;font-weight:400;line-height:40px;height:40px;white-space:pre;letter-spacing:1.033px;color:#dedede">Network</div>
<div style="position:absolute;left:153.70px;top:733.80px;font-family:'Liberation Sans',sans-serif;font-size:16.8px;font-weight:400;line-height:40px;height:40px;white-space:pre;letter-spacing:0.300px;color:#dedede">Render Debug</div>
<div style="position:absolute;left:309.70px;top:733.80px;font-family:'Liberation Sans',sans-serif;font-size:16.8px;font-weight:400;line-height:40px;height:40px;white-space:pre;letter-spacing:0.100px;color:#dedede">Log</div>
<div style="position:absolute;left:197.20px;top:772.00px;font-family:'Liberation Sans',sans-serif;font-size:15px;font-weight:400;line-height:40px;height:40px;white-space:pre;letter-spacing:-0.171px;color:#dedede">Select a RenderNode...</div>
<div style="position:absolute;left:1046.40px;top:773.60px;font-family:'Liberation Sans',sans-serif;font-size:16.8px;font-weight:400;line-height:40px;height:40px;white-space:pre;letter-spacing:0.150px;color:#555555">Add</div>
<div style="position:absolute;left:23.10px;top:809.80px;font-family:'Liberation Sans',sans-serif;font-size:16.8px;font-weight:400;line-height:40px;height:40px;white-space:pre;letter-spacing:0.140px;color:#dedede">Status</div>
<div style="position:absolute;left:128.60px;top:809.80px;font-family:'Liberation Sans',sans-serif;font-size:16.8px;font-weight:400;line-height:40px;height:40px;white-space:pre;letter-spacing:0.900px;color:#dedede">Name</div>
<div style="position:absolute;left:254.40px;top:809.80px;font-family:'Liberation Sans',sans-serif;font-size:16.8px;font-weight:400;line-height:40px;height:40px;white-space:pre;letter-spacing:0.200px;color:#dedede">Address</div>
<div style="position:absolute;left:378.30px;top:809.80px;font-family:'Liberation Sans',sans-serif;font-size:16.8px;font-weight:400;line-height:40px;height:40px;white-space:pre;letter-spacing:0.814px;color:#dedede">Hostname</div>
<div style="position:absolute;left:503.30px;top:809.80px;font-family:'Liberation Sans',sans-serif;font-size:16.8px;font-weight:400;line-height:40px;height:40px;white-space:pre;letter-spacing:0.233px;color:#dedede">Enabled</div>
<div style="position:absolute;left:628.30px;top:809.80px;font-family:'Liberation Sans',sans-serif;font-size:16.8px;font-weight:400;line-height:40px;height:40px;white-space:pre;letter-spacing:0.000px;color:#dedede">Role</div>
<div style="position:absolute;left:753.00px;top:809.80px;font-family:'Liberation Sans',sans-serif;font-size:16.8px;font-weight:400;line-height:40px;height:40px;white-space:pre;letter-spacing:0.217px;color:#dedede">License</div>
<div style="position:absolute;left:879.00px;top:809.80px;font-family:'Liberation Sans',sans-serif;font-size:16.8px;font-weight:400;line-height:40px;height:40px;white-space:pre;letter-spacing:-0.033px;color:#dedede">OS version</div>
<div style="position:absolute;left:1004.50px;top:809.80px;font-family:'Liberation Sans',sans-serif;font-size:16.8px;font-weight:400;line-height:40px;height:40px;white-space:pre;letter-spacing:-0.100px;color:#dedede">CPU util</div>
<div style="position:absolute;left:1128.50px;top:809.80px;width:42.4px;overflow:hidden;font-family:'Liberation Sans',sans-serif;font-size:16.8px;font-weight:400;line-height:40px;height:40px;white-space:pre;letter-spacing:-0.900px;color:#dedede">RAM util</div>
<div style="position:absolute;left:1180.70px;top:726.80px;font-family:'Liberation Sans',sans-serif;font-size:16.8px;font-weight:400;line-height:40px;height:40px;white-space:pre;letter-spacing:0.656px;color:#dedede">Properties</div>
<div style="position:absolute;left:1261.20px;top:773.10px;font-family:'Liberation Sans',sans-serif;font-size:15.4px;font-weight:400;line-height:40px;height:40px;white-space:pre;letter-spacing:-0.425px;color:#dedede">Connect to a Relay...</div>
<div style="position:absolute;left:1188.30px;top:829.70px;font-family:'Liberation Sans',sans-serif;font-size:16.8px;font-weight:400;line-height:40px;height:40px;white-space:pre;letter-spacing:0.389px;color:#dedede">1 selected</div>
<div style="position:absolute;left:1801.50px;top:829.90px;font-family:'Liberation Sans',sans-serif;font-size:16.8px;font-weight:400;line-height:40px;height:40px;white-space:pre;letter-spacing:0.318px;color:#dedede">Deselect All</div>
<div style="position:absolute;left:1200.80px;top:871.60px;font-family:'Liberation Sans',sans-serif;font-size:16.8px;font-weight:400;line-height:40px;height:40px;white-space:pre;letter-spacing:1.017px;color:#dedede">Network</div>
<div style="position:absolute;left:1312.70px;top:871.60px;font-family:'Liberation Sans',sans-serif;font-size:16.8px;font-weight:400;line-height:40px;height:40px;white-space:pre;letter-spacing:0.430px;color:#dedede">RenderNodes</div>
<div style="position:absolute;left:1181.00px;top:937.70px;font-family:'Liberation Sans',sans-serif;font-size:16.8px;font-weight:400;line-height:40px;height:40px;white-space:pre;letter-spacing:0.490px;color:#4b4b4b">RenderNodes is empty.</div>
<div style="position:absolute;left:380.90px;top:1085.00px;font-family:'Liberation Sans',sans-serif;font-size:15.6px;font-weight:400;line-height:40px;height:40px;white-space:pre;letter-spacing:0.740px;color:#c4c4c4">00:00:00.00</div>
<div style="position:absolute;left:500.55px;top:1085.00px;font-family:'Liberation Sans',sans-serif;font-size:15.6px;font-weight:400;line-height:40px;height:40px;white-space:pre;letter-spacing:0.740px;color:#c4c4c4">00:00:00.10</div>
<div style="position:absolute;left:620.20px;top:1085.00px;font-family:'Liberation Sans',sans-serif;font-size:15.6px;font-weight:400;line-height:40px;height:40px;white-space:pre;letter-spacing:0.740px;color:#c4c4c4">00:00:00.20</div>
<div style="position:absolute;left:739.85px;top:1085.00px;font-family:'Liberation Sans',sans-serif;font-size:15.6px;font-weight:400;line-height:40px;height:40px;white-space:pre;letter-spacing:0.840px;color:#c4c4c4">00:00:01.06</div>
<div style="position:absolute;left:859.50px;top:1085.00px;font-family:'Liberation Sans',sans-serif;font-size:15.6px;font-weight:400;line-height:40px;height:40px;white-space:pre;letter-spacing:0.840px;color:#c4c4c4">00:00:01.16</div>
<div style="position:absolute;left:979.15px;top:1085.00px;font-family:'Liberation Sans',sans-serif;font-size:15.6px;font-weight:400;line-height:40px;height:40px;white-space:pre;letter-spacing:0.840px;color:#c4c4c4">00:00:02.02</div>
<div style="position:absolute;left:1098.80px;top:1085.00px;font-family:'Liberation Sans',sans-serif;font-size:15.6px;font-weight:400;line-height:40px;height:40px;white-space:pre;letter-spacing:0.840px;color:#c4c4c4">00:00:02.12</div>
<div style="position:absolute;left:1218.45px;top:1085.00px;font-family:'Liberation Sans',sans-serif;font-size:15.6px;font-weight:400;line-height:40px;height:40px;white-space:pre;letter-spacing:0.840px;color:#c4c4c4">00:00:02.22</div>
<div style="position:absolute;left:1338.10px;top:1085.00px;font-family:'Liberation Sans',sans-serif;font-size:15.6px;font-weight:400;line-height:40px;height:40px;white-space:pre;letter-spacing:0.840px;color:#c4c4c4">00:00:03.08</div>
<div style="position:absolute;left:1457.75px;top:1085.00px;font-family:'Liberation Sans',sans-serif;font-size:15.6px;font-weight:400;line-height:40px;height:40px;white-space:pre;letter-spacing:0.840px;color:#c4c4c4">00:00:03.18</div>
<div style="position:absolute;left:1577.50px;top:1085.00px;width:9.5px;overflow:hidden;font-family:'Liberation Sans',sans-serif;font-size:15.6px;font-weight:400;line-height:40px;height:40px;white-space:pre;letter-spacing:0.600px;color:#c4c4c4">00</div>
<div style="position:absolute;left:1742.40px;top:1085.40px;font-family:'Liberation Sans',sans-serif;font-size:18px;font-weight:400;line-height:40px;height:40px;white-space:pre;letter-spacing:-0.200px;color:#5e5e70">RF</div>
<div style="position:absolute;left:1742.40px;top:1107.70px;font-family:'Liberation Sans',sans-serif;font-size:18px;font-weight:400;line-height:40px;height:40px;white-space:pre;letter-spacing:0.800px;color:#5e5e70">PF</div>
<div style="position:absolute;left:1781.00px;top:1086.40px;font-family:'Liberation Mono',sans-serif;font-size:20px;font-weight:400;line-height:40px;height:40px;white-space:pre;letter-spacing:0.030px;color:#dedede">09:47:54.15</div>
<div style="position:absolute;left:1781.00px;top:1109.00px;font-family:'Liberation Mono',sans-serif;font-size:20px;font-weight:400;line-height:40px;height:40px;white-space:pre;letter-spacing:-0.070px;color:#dedede">00:00:00.00</div>
<div style="position:absolute;left:305px;top:54px;width:84px;height:46px;border:6px solid #fbb034"></div>
<div style="position:absolute;left:1px;top:723px;width:1165px;height:179px;border:6px solid #fbb034"></div></div></body></html>
